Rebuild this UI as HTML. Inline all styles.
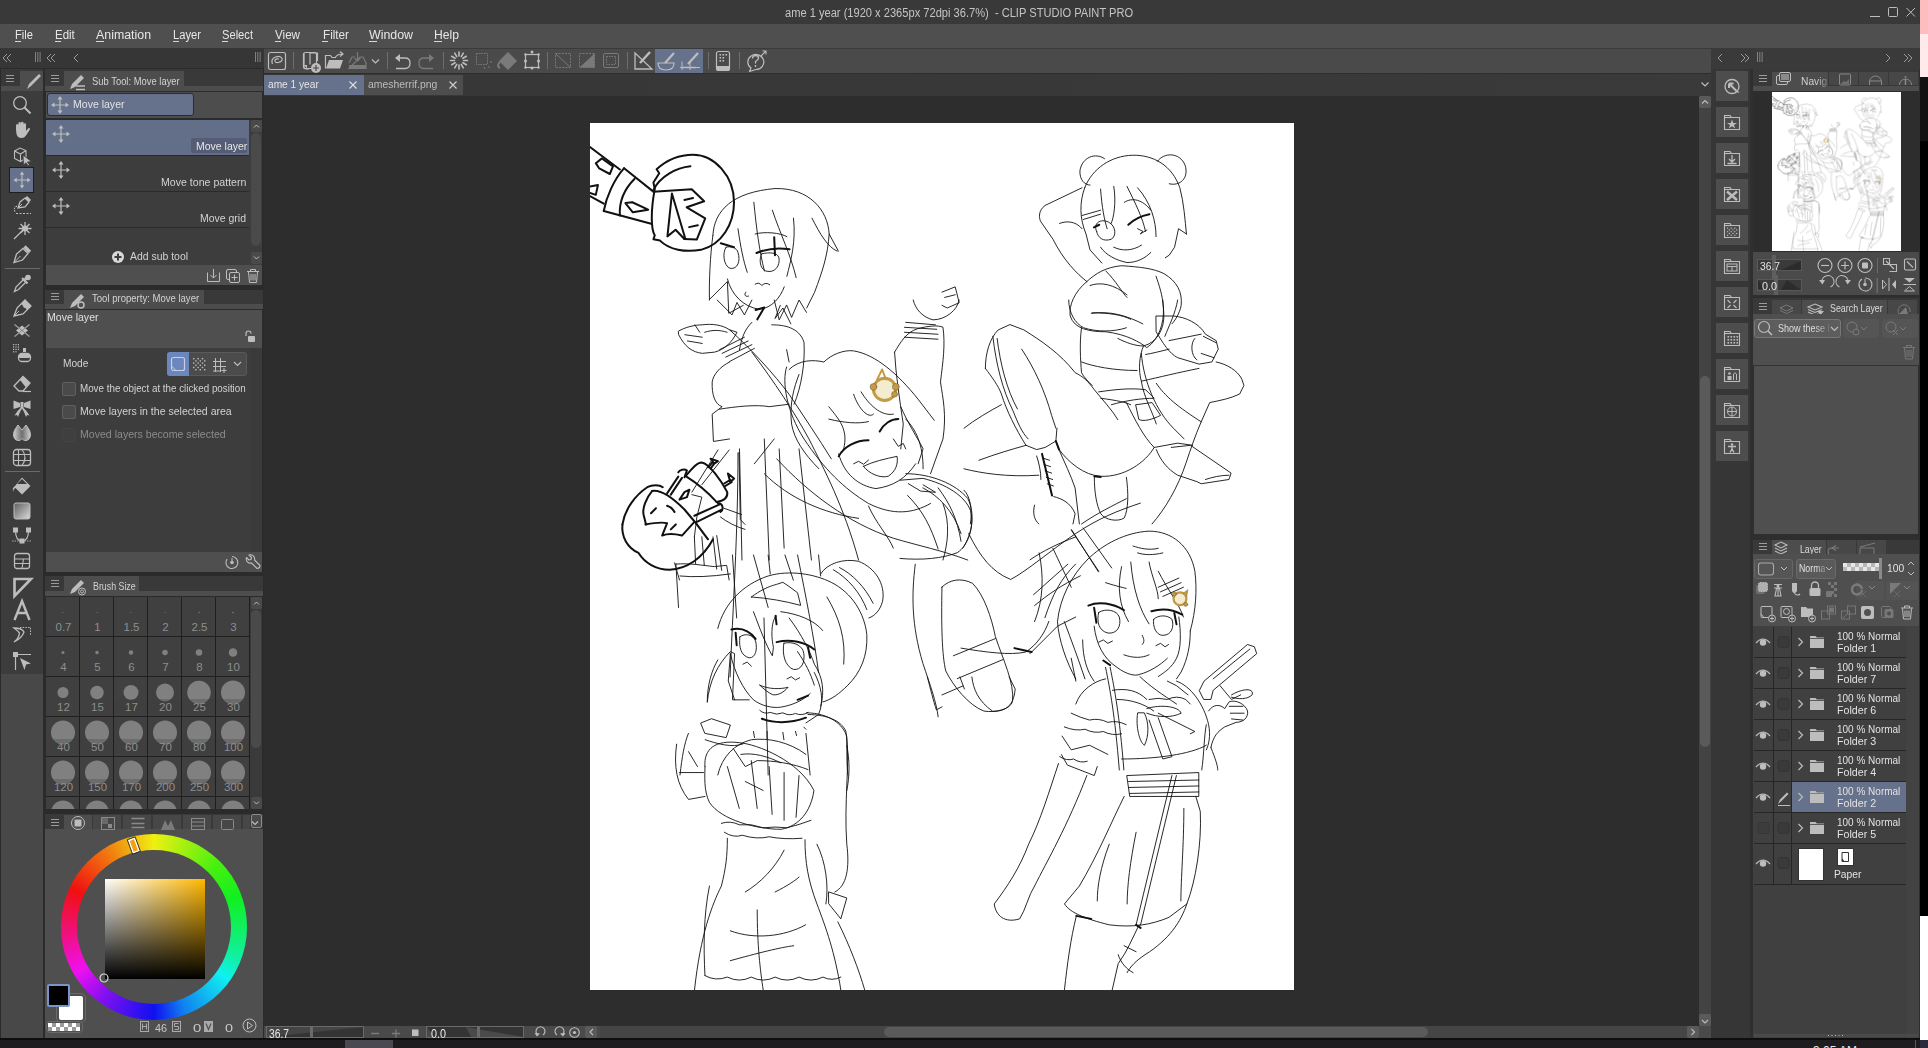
<!DOCTYPE html>
<html><head><meta charset="utf-8">
<style>
*{margin:0;padding:0;box-sizing:border-box}
html,body{width:1928px;height:1048px;overflow:hidden;background:#2d2d2d;font-family:"Liberation Sans",sans-serif;color:#d4d4d4;font-size:11px}
.a{position:absolute}
.t{position:absolute;white-space:pre;line-height:1;transform-origin:0 0}
svg{position:absolute;overflow:visible}
</style></head><body>
<div class="a" style="left:0px;top:0px;width:1920px;height:24px;background:#393939;"></div>
<div class="t" style="left:785.40px;top:7.24px;font-size:12px;color:#c4c4c4;transform:scaleX(0.9254);">ame 1 year (1920 x 2365px 72dpi 36.7%)  - CLIP STUDIO PAINT PRO</div>
<svg style="left:1868px;top:0px;" width="52" height="24" viewBox="0 0 52 24"><line x1="2" y1="16.5" x2="12" y2="16.5" stroke="#bdbdbd" stroke-width="1"/><rect x="20.5" y="7.5" width="9" height="9" rx="1" fill="none" stroke="#bdbdbd" stroke-width="1"/><path d="M38.5 8 L47 16.5 M47 8 L38.5 16.5" stroke="#bdbdbd" stroke-width="1"/></svg>
<div class="a" style="left:0px;top:24px;width:1920px;height:24px;background:#4f4f4f;"></div>
<div class="t" style="left:15.40px;top:29.44px;font-size:12px;color:#e6e6e6;transform:scaleX(0.9310);">File</div>
<div class="a" style="left:15px;top:41px;width:6px;height:1px;background:#d8d8d8;"></div>
<div class="t" style="left:55.40px;top:29.44px;font-size:12px;color:#e6e6e6;transform:scaleX(0.9576);">Edit</div>
<div class="a" style="left:55px;top:41px;width:6px;height:1px;background:#d8d8d8;"></div>
<div class="t" style="left:96.00px;top:29.44px;font-size:12px;color:#e6e6e6;transform:scaleX(1.0308);">Animation</div>
<div class="a" style="left:96px;top:41px;width:8px;height:1px;background:#d8d8d8;"></div>
<div class="t" style="left:173.00px;top:29.44px;font-size:12px;color:#e6e6e6;transform:scaleX(0.9329);">Layer</div>
<div class="a" style="left:173px;top:41px;width:6px;height:1px;background:#d8d8d8;"></div>
<div class="t" style="left:222.00px;top:29.44px;font-size:12px;color:#e6e6e6;transform:scaleX(0.9295);">Select</div>
<div class="a" style="left:222px;top:41px;width:6px;height:1px;background:#d8d8d8;"></div>
<div class="t" style="left:275.00px;top:29.44px;font-size:12px;color:#e6e6e6;transform:scaleX(0.9693);">View</div>
<div class="a" style="left:275px;top:41px;width:6px;height:1px;background:#d8d8d8;"></div>
<div class="t" style="left:322.50px;top:29.44px;font-size:12px;color:#e6e6e6;transform:scaleX(0.9751);">Filter</div>
<div class="a" style="left:322px;top:41px;width:6px;height:1px;background:#d8d8d8;"></div>
<div class="t" style="left:369.00px;top:29.44px;font-size:12px;color:#e6e6e6;transform:scaleX(1.0310);">Window</div>
<div class="a" style="left:369px;top:41px;width:8px;height:1px;background:#d8d8d8;"></div>
<div class="t" style="left:434.00px;top:29.44px;font-size:12px;color:#e6e6e6;transform:scaleX(1.0130);">Help</div>
<div class="a" style="left:434px;top:41px;width:8px;height:1px;background:#d8d8d8;"></div>
<div class="a" style="left:0px;top:48px;width:264px;height:20px;background:#363636;"></div>
<div class="a" style="left:264px;top:48px;width:1447px;height:25px;background:#4a4a4a;"></div>
<div class="a" style="left:264px;top:48px;width:1447px;height:1px;background:#3a3a3a;"></div>
<div class="a" style="left:1711px;top:48px;width:209px;height:21px;background:#3a3a3a;"></div>
<svg style="left:0px;top:48px;" width="264" height="20" viewBox="0 0 264 20"><path d="M7 6 L3 10 L7 14 M11 6 L7 10 L11 14" fill="none" stroke="#9a9a9a" stroke-width="1"/><path d="M35.5 4 V14 M37.8 4 V14 M40.1 4 V14" stroke="#8a8a8a" stroke-width="0.9"/><path d="M51 6 L47 10 L51 14 M55 6 L51 10 L55 14" fill="none" stroke="#9a9a9a" stroke-width="1"/><path d="M78 6 L74 10 L78 14" fill="none" stroke="#9a9a9a" stroke-width="1"/><path d="M255.5 4 V14 M257.8 4 V14 M260.1 4 V14" stroke="#8a8a8a" stroke-width="0.9"/></svg>
<svg style="left:1711px;top:48px;" width="209" height="21" viewBox="0 0 209 21"><path d="M11 6 L7 10 L11 14" fill="none" stroke="#9a9a9a" stroke-width="1"/><path d="M30 6 L34 10 L30 14 M34 6 L38 10 L34 14" fill="none" stroke="#9a9a9a" stroke-width="1"/><path d="M46.5 4 V14 M48.8 4 V14 M51.1 4 V14" stroke="#8a8a8a" stroke-width="0.9"/><path d="M175 6 L179 10 L175 14" fill="none" stroke="#9a9a9a" stroke-width="1"/><path d="M193 6 L197 10 L193 14 M197 6 L201 10 L197 14" fill="none" stroke="#9a9a9a" stroke-width="1"/></svg>
<div class="a" style="left:1920px;top:0px;width:8px;height:34px;background:#fdbcbd;"></div>
<div class="a" style="left:1920px;top:34px;width:8px;height:43px;background:#feeaea;"></div>
<div class="a" style="left:1920px;top:77px;width:8px;height:64px;background:#111111;"></div>
<div class="a" style="left:1920px;top:141px;width:8px;height:775px;background:#000000;"></div>
<div class="a" style="left:1920px;top:916px;width:8px;height:124px;background:#ffffff;"></div>
<div class="a" style="left:0px;top:68px;width:264px;height:972px;background:#2b2b2b;"></div>
<div class="a" style="left:1px;top:69px;width:42px;height:17px;background:#393939;"></div>
<div class="a" style="left:20px;top:71px;width:23px;height:15px;background:#4d4d4d;"></div>
<div class="a" style="left:1px;top:86px;width:42px;height:5px;background:#4d4d4d;"></div>
<svg style="left:6px;top:75px;" width="8" height="7" viewBox="0 0 8 7"><path d="M0 0.5 H8 M0 3.5 H8 M0 6.5 H8" stroke="#9c9c9c" stroke-width="1"/></svg>
<svg style="left:20px;top:71px;" width="23" height="20" viewBox="0 0 23 20"><path d="M7 18 L9 13 L19 3 L21 5 L11 15 Z" fill="#bdbdbd"/></svg>
<div class="a" style="left:1px;top:91px;width:42px;height:583px;background:#3c3c3c;"></div>
<div class="a" style="left:1px;top:674px;width:42px;height:364px;background:#484848;"></div>
<div class="a" style="left:10px;top:168px;width:23px;height:24px;background:#66718c;outline:1px solid #1e1e1e"></div>
<div class="a" style="left:5px;top:268px;width:35px;height:1px;background:#6a6a6a;"></div>
<div class="a" style="left:5px;top:471px;width:35px;height:1px;background:#6a6a6a;"></div>
<div class="a" style="left:45px;top:69px;width:218px;height:17px;background:#393939;"></div>
<div class="a" style="left:64px;top:71px;width:120px;height:15px;background:#4d4d4d;"></div>
<div class="a" style="left:45px;top:86px;width:218px;height:5px;background:#4d4d4d;"></div>
<svg style="left:51px;top:75px;" width="8" height="7" viewBox="0 0 8 7"><path d="M0 0.5 H8 M0 3.5 H8 M0 6.5 H8" stroke="#9c9c9c" stroke-width="1"/></svg>
<div class="t" style="left:91.90px;top:76.29px;font-size:11px;color:#d2d2d2;transform:scaleX(0.8555);">Sub Tool: Move layer</div>
<svg style="left:64px;top:71px;" width="26" height="20" viewBox="0 0 26 20"><path d="M6 18 L8 13 L17 4 L20 7 L11 16 Z" fill="#bdbdbd"/><path d="M12 15 H21 M12 18.5 H21" stroke="#bdbdbd" stroke-width="1.6"/></svg>
<div class="a" style="left:46px;top:92px;width:216px;height:26px;background:#4d4d4d;"></div>
<div class="a" style="left:47px;top:93px;width:147px;height:23px;background:#66718c;border-radius:3px;border:1px solid #2c2c2c"></div>
<div class="t" style="left:72.50px;top:99.17px;font-size:11.5px;color:#e2e2e2;transform:scaleX(0.9157);">Move layer</div>
<div class="a" style="left:46px;top:120px;width:216px;height:145px;background:#3d3d3d;"></div>
<div class="a" style="left:46px;top:120px;width:203px;height:35px;background:#636e88;"></div>
<div class="a" style="left:191px;top:138px;width:56px;height:15px;background:#545d75;border-radius:2px"></div>
<div class="t" style="left:195.70px;top:140.97px;font-size:11.5px;color:#e6e6e6;transform:scaleX(0.9122);">Move layer</div>
<div class="a" style="left:46px;top:155px;width:203px;height:1px;background:#2a2a2a;"></div>
<div class="a" style="left:46px;top:191px;width:203px;height:1px;background:#2a2a2a;"></div>
<div class="a" style="left:46px;top:227px;width:203px;height:1px;background:#2a2a2a;"></div>
<div class="t" style="left:160.60px;top:176.87px;font-size:11.5px;color:#d2d2d2;transform:scaleX(0.9214);">Move tone pattern</div>
<div class="t" style="left:200.00px;top:212.77px;font-size:11.5px;color:#d2d2d2;transform:scaleX(0.9111);">Move grid</div>
<div class="a" style="left:251px;top:120px;width:11px;height:12px;background:#4a4a4a;border-radius:2px"></div>
<div class="a" style="left:251px;top:133px;width:10px;height:113px;background:#4a4a4a;border-radius:5px"></div>
<div class="a" style="left:251px;top:252px;width:11px;height:12px;background:#4a4a4a;border-radius:2px"></div>
<svg style="left:251px;top:120px;" width="11" height="144" viewBox="0 0 11 144"><path d="M3 7.5 L5.5 5 L8 7.5" fill="none" stroke="#bdbdbd" stroke-width="1"/><path d="M3 136.5 L5.5 139 L8 136.5" fill="none" stroke="#bdbdbd" stroke-width="1"/></svg>
<svg style="left:49.5px;top:94.5px;" width="20" height="20" viewBox="0 0 20 20"><g transform="translate(10 10) scale(1.0)"><path d="M0 -7 V7 M-7 0 H7" stroke="#bdbdbd" stroke-width="1.2"/><path d="M0 -9 L-2.5 -5.5 H2.5 Z M0 9 L-2.5 5.5 H2.5 Z M-9 0 L-5.5 -2.5 V2.5 Z M9 0 L5.5 -2.5 V2.5 Z" fill="#bdbdbd"/></g></svg>
<svg style="left:50.5px;top:124px;" width="20" height="20" viewBox="0 0 20 20"><g transform="translate(10 10) scale(1.0)"><path d="M0 -7 V7 M-7 0 H7" stroke="#bdbdbd" stroke-width="1.2"/><path d="M0 -9 L-2.5 -5.5 H2.5 Z M0 9 L-2.5 5.5 H2.5 Z M-9 0 L-5.5 -2.5 V2.5 Z M9 0 L5.5 -2.5 V2.5 Z" fill="#bdbdbd"/></g></svg>
<svg style="left:50.5px;top:160px;" width="20" height="20" viewBox="0 0 20 20"><g transform="translate(10 10) scale(1.0)"><path d="M0 -7 V7 M-7 0 H7" stroke="#bdbdbd" stroke-width="1.2"/><path d="M0 -9 L-2.5 -5.5 H2.5 Z M0 9 L-2.5 5.5 H2.5 Z M-9 0 L-5.5 -2.5 V2.5 Z M9 0 L5.5 -2.5 V2.5 Z" fill="#bdbdbd"/></g></svg>
<svg style="left:50.5px;top:196px;" width="20" height="20" viewBox="0 0 20 20"><g transform="translate(10 10) scale(1.0)"><path d="M0 -7 V7 M-7 0 H7" stroke="#bdbdbd" stroke-width="1.2"/><path d="M0 -9 L-2.5 -5.5 H2.5 Z M0 9 L-2.5 5.5 H2.5 Z M-9 0 L-5.5 -2.5 V2.5 Z M9 0 L5.5 -2.5 V2.5 Z" fill="#bdbdbd"/></g></svg>
<svg style="left:111px;top:250px;" width="14" height="14" viewBox="0 0 14 14"><circle cx="7" cy="7" r="6" fill="#d8d8d8"/><path d="M7 3.5 V10.5 M3.5 7 H10.5" stroke="#3d3d3d" stroke-width="2"/></svg>
<div class="t" style="left:130.00px;top:250.97px;font-size:11.5px;color:#d2d2d2;transform:scaleX(0.9072);">Add sub tool</div>
<div class="a" style="left:46px;top:265px;width:216px;height:20px;background:#4f4f4f;"></div>
<svg style="left:205px;top:267px;" width="58" height="16" viewBox="0 0 58 16"><path d="M2.5 5.5 V14.5 H14.5 V5.5" fill="none" stroke="#bdbdbd" stroke-width="1"/><path d="M8.5 2 V11 M5.5 8 L8.5 11 L11.5 8" fill="none" stroke="#bdbdbd" stroke-width="1"/><rect x="21.5" y="2.5" width="10" height="10" rx="1.5" fill="none" stroke="#bdbdbd"/><rect x="24.5" y="5.5" width="10" height="10" rx="1.5" fill="#4f4f4f" stroke="#bdbdbd"/><path d="M29.5 7.5 V13.5 M26.5 10.5 H32.5" stroke="#bdbdbd"/><path d="M42 4.5 H54 M45.5 4.5 V2.5 H50.5 V4.5 M43.5 5 L44.5 15.5 H51.5 L52.5 5 M46 7 V13.5 M48 7 V13.5 M50 7 V13.5" fill="none" stroke="#bdbdbd"/></svg>
<div class="a" style="left:45px;top:290px;width:218px;height:14px;background:#393939;"></div>
<div class="a" style="left:64px;top:290px;width:140px;height:14px;background:#4d4d4d;"></div>
<div class="a" style="left:45px;top:304px;width:218px;height:5px;background:#4d4d4d;"></div>
<svg style="left:51px;top:293px;" width="8" height="7" viewBox="0 0 8 7"><path d="M0 0.5 H8 M0 3.5 H8 M0 6.5 H8" stroke="#9c9c9c" stroke-width="1"/></svg>
<div class="t" style="left:92.40px;top:293.39px;font-size:11px;color:#d2d2d2;transform:scaleX(0.8673);">Tool property: Move layer</div>
<svg style="left:64px;top:290px;" width="28" height="20" viewBox="0 0 28 20"><path d="M6 18 L8 13 L17 4 L20 7 L11 16 Z" fill="#bdbdbd"/><circle cx="17" cy="15" r="3" fill="none" stroke="#bdbdbd" stroke-width="1.5"/></svg>
<div class="a" style="left:46px;top:310px;width:216px;height:38px;background:#4f4f4f;"></div>
<div class="t" style="left:47.30px;top:311.97px;font-size:11.5px;color:#e0e0e0;transform:scaleX(0.9157);">Move layer</div>
<svg style="left:243px;top:330px;" width="14" height="14" viewBox="0 0 14 14"><path d="M3 6 V3.5 A2.5 2.5 0 0 1 8 3.5" fill="none" stroke="#bdbdbd" stroke-width="1.2"/><rect x="5" y="6" width="7" height="6" rx="1" fill="#bdbdbd"/></svg>
<div class="a" style="left:46px;top:348px;width:216px;height:204px;background:#3d3d3d;"></div>
<div class="a" style="left:250px;top:348px;width:12px;height:204px;background:#3a3a3a;"></div>
<div class="t" style="left:62.60px;top:358.27px;font-size:11.5px;color:#d2d2d2;transform:scaleX(0.8830);">Mode</div>
<div class="a" style="left:167px;top:352px;width:80px;height:24px;background:#4b4b4b;border-radius:3px;border:1px solid #5a5a5a"></div>
<div class="a" style="left:167px;top:352px;width:22px;height:24px;background:#6c86bf;border-radius:3px 0 0 3px"></div>
<svg style="left:167px;top:352px;" width="80" height="24" viewBox="0 0 80 24"><rect x="4.5" y="5.5" width="13" height="13" rx="2" fill="none" stroke="#c9cfdf" stroke-width="1.2"/><path d="M4.5 14 L9 18.5" stroke="#c9cfdf"/><g fill="#bdbdbd"><rect x="26.0" y="6.0" width="1.4" height="1.4"/><rect x="26.0" y="10.4" width="1.4" height="1.4"/><rect x="26.0" y="14.8" width="1.4" height="1.4"/><rect x="28.2" y="8.2" width="1.4" height="1.4"/><rect x="28.2" y="12.6" width="1.4" height="1.4"/><rect x="28.2" y="17.0" width="1.4" height="1.4"/><rect x="30.4" y="6.0" width="1.4" height="1.4"/><rect x="30.4" y="10.4" width="1.4" height="1.4"/><rect x="30.4" y="14.8" width="1.4" height="1.4"/><rect x="32.6" y="8.2" width="1.4" height="1.4"/><rect x="32.6" y="12.6" width="1.4" height="1.4"/><rect x="32.6" y="17.0" width="1.4" height="1.4"/><rect x="34.8" y="6.0" width="1.4" height="1.4"/><rect x="34.8" y="10.4" width="1.4" height="1.4"/><rect x="34.8" y="14.8" width="1.4" height="1.4"/><rect x="37.0" y="8.2" width="1.4" height="1.4"/><rect x="37.0" y="12.6" width="1.4" height="1.4"/><rect x="37.0" y="17.0" width="1.4" height="1.4"/></g><path d="M48.5 6 V20 M53.5 6 V20 M46 9.5 H59 M46 14.5 H59 M46 19 H54 M57 16 V21 M54.5 18.5 H59.5" stroke="#bdbdbd" stroke-width="1"/><path d="M67 10 L70.5 13.5 L74 10" fill="none" stroke="#bdbdbd" stroke-width="1.2"/></svg>
<div class="a" style="left:62px;top:382px;width:14px;height:14px;background:#4a4a4a;border-radius:2px;border:1px solid #5f5f5f"></div>
<div class="t" style="left:80.30px;top:382.97px;font-size:11.5px;color:#d2d2d2;transform:scaleX(0.8527);">Move the object at the clicked position</div>
<div class="a" style="left:62px;top:405px;width:14px;height:14px;background:#4a4a4a;border-radius:2px;border:1px solid #5f5f5f"></div>
<div class="t" style="left:80.30px;top:405.87px;font-size:11.5px;color:#d2d2d2;transform:scaleX(0.9164);">Move layers in the selected area</div>
<div class="a" style="left:62px;top:428px;width:14px;height:14px;background:#3f3f3f;border-radius:2px;border:1px solid #434343"></div>
<div class="t" style="left:80.30px;top:428.77px;font-size:11.5px;color:#8c8c8c;transform:scaleX(0.9192);">Moved layers become selected</div>
<div class="a" style="left:46px;top:552px;width:216px;height:20px;background:#4f4f4f;"></div>
<svg style="left:224px;top:554px;" width="38" height="16" viewBox="0 0 38 16"><path d="M8 2.5 A6 6 0 1 1 3 5" fill="none" stroke="#bdbdbd" stroke-width="1.1"/><circle cx="8" cy="8.5" r="1.8" fill="#bdbdbd"/><path d="M8 8.5 V4" stroke="#bdbdbd"/><path transform="translate(-2 0)" d="M35 14.5 L29.5 9 A4.2 4.2 0 0 1 24.5 3.5 L27 6 L29 5.5 L29.5 3.5 L27 1 A4.2 4.2 0 0 1 32.5 6 L38 11.5 Q38 14.5 35 14.5 Z" fill="none" stroke="#bdbdbd" stroke-width="1.1" stroke-linejoin="round"/></svg>
<div class="a" style="left:45px;top:576px;width:218px;height:15px;background:#393939;"></div>
<div class="a" style="left:64px;top:576px;width:75px;height:15px;background:#4d4d4d;"></div>
<div class="a" style="left:45px;top:591px;width:218px;height:5px;background:#4d4d4d;"></div>
<svg style="left:51px;top:580px;" width="8" height="7" viewBox="0 0 8 7"><path d="M0 0.5 H8 M0 3.5 H8 M0 6.5 H8" stroke="#9c9c9c" stroke-width="1"/></svg>
<div class="t" style="left:92.50px;top:581.39px;font-size:11px;color:#d2d2d2;transform:scaleX(0.8028);">Brush Size</div>
<svg style="left:64px;top:576px;" width="28" height="20" viewBox="0 0 28 20"><path d="M6 18 L8 13 L17 4 L20 7 L11 16 Z" fill="#bdbdbd"/><circle cx="18" cy="15.5" r="3.5" fill="#4d4d4d" stroke="#bdbdbd" stroke-width="1"/><circle cx="18" cy="15.5" r="1.5" fill="none" stroke="#bdbdbd" stroke-width="1"/></svg>
<div class="a" style="left:0;top:0;width:1928px;height:1048px;clip-path:inset(597px 1678px 239px 46px)">
<div class="a" style="left:46px;top:597px;width:204px;height:212px;background:#1f1f1f;"></div>
<div class="a" style="left:46px;top:597px;width:33px;height:39px;background:#404040;"></div>
<svg style="left:46px;top:597px;" width="33" height="39" viewBox="0 0 33 39"><circle cx="17" cy="15.5" r="0.5" fill="#808080"/></svg>
<div class="t" style="left:55.51px;top:622.27px;font-size:11.5px;color:#8e8e8e;transform:scaleX(1.0000);">0.7</div>
<div class="a" style="left:80px;top:597px;width:33px;height:39px;background:#404040;"></div>
<svg style="left:80px;top:597px;" width="33" height="39" viewBox="0 0 33 39"><circle cx="17" cy="15.5" r="0.5" fill="#808080"/></svg>
<div class="t" style="left:94.30px;top:622.27px;font-size:11.5px;color:#8e8e8e;transform:scaleX(1.0000);">1</div>
<div class="a" style="left:114px;top:597px;width:33px;height:39px;background:#404040;"></div>
<svg style="left:114px;top:597px;" width="33" height="39" viewBox="0 0 33 39"><circle cx="17" cy="15.5" r="0.5" fill="#808080"/></svg>
<div class="t" style="left:123.51px;top:622.27px;font-size:11.5px;color:#8e8e8e;transform:scaleX(1.0000);">1.5</div>
<div class="a" style="left:148px;top:597px;width:33px;height:39px;background:#404040;"></div>
<svg style="left:148px;top:597px;" width="33" height="39" viewBox="0 0 33 39"><circle cx="17" cy="15.5" r="0.5" fill="#808080"/></svg>
<div class="t" style="left:162.30px;top:622.27px;font-size:11.5px;color:#8e8e8e;transform:scaleX(1.0000);">2</div>
<div class="a" style="left:182px;top:597px;width:33px;height:39px;background:#404040;"></div>
<svg style="left:182px;top:597px;" width="33" height="39" viewBox="0 0 33 39"><circle cx="17" cy="15.5" r="0.65" fill="#808080"/></svg>
<div class="t" style="left:191.51px;top:622.27px;font-size:11.5px;color:#8e8e8e;transform:scaleX(1.0000);">2.5</div>
<div class="a" style="left:216px;top:597px;width:33px;height:39px;background:#404040;"></div>
<svg style="left:216px;top:597px;" width="33" height="39" viewBox="0 0 33 39"><circle cx="17" cy="15.5" r="0.8" fill="#808080"/></svg>
<div class="t" style="left:230.30px;top:622.27px;font-size:11.5px;color:#8e8e8e;transform:scaleX(1.0000);">3</div>
<div class="a" style="left:46px;top:637px;width:33px;height:39px;background:#404040;"></div>
<svg style="left:46px;top:637px;" width="33" height="39" viewBox="0 0 33 39"><circle cx="17" cy="15.5" r="1.5" fill="#808080"/></svg>
<div class="t" style="left:60.30px;top:662.27px;font-size:11.5px;color:#8e8e8e;transform:scaleX(1.0000);">4</div>
<div class="a" style="left:80px;top:637px;width:33px;height:39px;background:#404040;"></div>
<svg style="left:80px;top:637px;" width="33" height="39" viewBox="0 0 33 39"><circle cx="17" cy="15.5" r="1.75" fill="#808080"/></svg>
<div class="t" style="left:94.30px;top:662.27px;font-size:11.5px;color:#8e8e8e;transform:scaleX(1.0000);">5</div>
<div class="a" style="left:114px;top:637px;width:33px;height:39px;background:#404040;"></div>
<svg style="left:114px;top:637px;" width="33" height="39" viewBox="0 0 33 39"><circle cx="17" cy="15.5" r="2.25" fill="#808080"/></svg>
<div class="t" style="left:128.30px;top:662.27px;font-size:11.5px;color:#8e8e8e;transform:scaleX(1.0000);">6</div>
<div class="a" style="left:148px;top:637px;width:33px;height:39px;background:#404040;"></div>
<svg style="left:148px;top:637px;" width="33" height="39" viewBox="0 0 33 39"><circle cx="17" cy="15.5" r="2.75" fill="#808080"/></svg>
<div class="t" style="left:162.30px;top:662.27px;font-size:11.5px;color:#8e8e8e;transform:scaleX(1.0000);">7</div>
<div class="a" style="left:182px;top:637px;width:33px;height:39px;background:#404040;"></div>
<svg style="left:182px;top:637px;" width="33" height="39" viewBox="0 0 33 39"><circle cx="17" cy="15.5" r="3.25" fill="#808080"/></svg>
<div class="t" style="left:196.30px;top:662.27px;font-size:11.5px;color:#8e8e8e;transform:scaleX(1.0000);">8</div>
<div class="a" style="left:216px;top:637px;width:33px;height:39px;background:#404040;"></div>
<svg style="left:216px;top:637px;" width="33" height="39" viewBox="0 0 33 39"><circle cx="17" cy="15.5" r="4.25" fill="#808080"/></svg>
<div class="t" style="left:227.10px;top:662.27px;font-size:11.5px;color:#8e8e8e;transform:scaleX(1.0000);">10</div>
<div class="a" style="left:46px;top:677px;width:33px;height:39px;background:#404040;"></div>
<svg style="left:46px;top:677px;" width="33" height="39" viewBox="0 0 33 39"><circle cx="17" cy="15.5" r="5.5" fill="#808080"/></svg>
<div class="t" style="left:57.10px;top:702.27px;font-size:11.5px;color:#8e8e8e;transform:scaleX(1.0000);">12</div>
<div class="a" style="left:80px;top:677px;width:33px;height:39px;background:#404040;"></div>
<svg style="left:80px;top:677px;" width="33" height="39" viewBox="0 0 33 39"><circle cx="17" cy="15.5" r="6.75" fill="#808080"/></svg>
<div class="t" style="left:91.10px;top:702.27px;font-size:11.5px;color:#8e8e8e;transform:scaleX(1.0000);">15</div>
<div class="a" style="left:114px;top:677px;width:33px;height:39px;background:#404040;"></div>
<svg style="left:114px;top:677px;" width="33" height="39" viewBox="0 0 33 39"><circle cx="17" cy="15.5" r="7.5" fill="#808080"/></svg>
<div class="a" style="left:114px;top:699px;width:33px;height:17px;background:rgba(64,64,64,0.3);"></div>
<div class="t" style="left:125.10px;top:702.27px;font-size:11.5px;color:#8e8e8e;transform:scaleX(1.0000);">17</div>
<div class="a" style="left:148px;top:677px;width:33px;height:39px;background:#404040;"></div>
<svg style="left:148px;top:677px;" width="33" height="39" viewBox="0 0 33 39"><circle cx="17" cy="15.5" r="9.0" fill="#808080"/></svg>
<div class="a" style="left:148px;top:699px;width:33px;height:17px;background:rgba(64,64,64,0.3);"></div>
<div class="t" style="left:159.10px;top:702.27px;font-size:11.5px;color:#8e8e8e;transform:scaleX(1.0000);">20</div>
<div class="a" style="left:182px;top:677px;width:33px;height:39px;background:#404040;"></div>
<svg style="left:182px;top:677px;" width="33" height="39" viewBox="0 0 33 39"><circle cx="17" cy="15.5" r="11.75" fill="#808080"/></svg>
<div class="a" style="left:182px;top:699px;width:33px;height:17px;background:rgba(64,64,64,0.3);"></div>
<div class="t" style="left:193.10px;top:702.27px;font-size:11.5px;color:#8e8e8e;transform:scaleX(1.0000);">25</div>
<div class="a" style="left:216px;top:677px;width:33px;height:39px;background:#404040;"></div>
<svg style="left:216px;top:677px;" width="33" height="39" viewBox="0 0 33 39"><circle cx="17" cy="15.5" r="12.0" fill="#808080"/></svg>
<div class="a" style="left:216px;top:699px;width:33px;height:17px;background:rgba(64,64,64,0.3);"></div>
<div class="t" style="left:227.10px;top:702.27px;font-size:11.5px;color:#8e8e8e;transform:scaleX(1.0000);">30</div>
<div class="a" style="left:46px;top:717px;width:33px;height:39px;background:#404040;"></div>
<svg style="left:46px;top:717px;" width="33" height="39" viewBox="0 0 33 39"><circle cx="17" cy="15.5" r="12.0" fill="#808080"/></svg>
<div class="a" style="left:46px;top:739px;width:33px;height:17px;background:rgba(64,64,64,0.3);"></div>
<div class="t" style="left:57.10px;top:742.27px;font-size:11.5px;color:#8e8e8e;transform:scaleX(1.0000);">40</div>
<div class="a" style="left:80px;top:717px;width:33px;height:39px;background:#404040;"></div>
<svg style="left:80px;top:717px;" width="33" height="39" viewBox="0 0 33 39"><circle cx="17" cy="15.5" r="12.0" fill="#808080"/></svg>
<div class="a" style="left:80px;top:739px;width:33px;height:17px;background:rgba(64,64,64,0.3);"></div>
<div class="t" style="left:91.10px;top:742.27px;font-size:11.5px;color:#8e8e8e;transform:scaleX(1.0000);">50</div>
<div class="a" style="left:114px;top:717px;width:33px;height:39px;background:#404040;"></div>
<svg style="left:114px;top:717px;" width="33" height="39" viewBox="0 0 33 39"><circle cx="17" cy="15.5" r="12.0" fill="#808080"/></svg>
<div class="a" style="left:114px;top:739px;width:33px;height:17px;background:rgba(64,64,64,0.3);"></div>
<div class="t" style="left:125.10px;top:742.27px;font-size:11.5px;color:#8e8e8e;transform:scaleX(1.0000);">60</div>
<div class="a" style="left:148px;top:717px;width:33px;height:39px;background:#404040;"></div>
<svg style="left:148px;top:717px;" width="33" height="39" viewBox="0 0 33 39"><circle cx="17" cy="15.5" r="12.0" fill="#808080"/></svg>
<div class="a" style="left:148px;top:739px;width:33px;height:17px;background:rgba(64,64,64,0.3);"></div>
<div class="t" style="left:159.10px;top:742.27px;font-size:11.5px;color:#8e8e8e;transform:scaleX(1.0000);">70</div>
<div class="a" style="left:182px;top:717px;width:33px;height:39px;background:#404040;"></div>
<svg style="left:182px;top:717px;" width="33" height="39" viewBox="0 0 33 39"><circle cx="17" cy="15.5" r="12.0" fill="#808080"/></svg>
<div class="a" style="left:182px;top:739px;width:33px;height:17px;background:rgba(64,64,64,0.3);"></div>
<div class="t" style="left:193.10px;top:742.27px;font-size:11.5px;color:#8e8e8e;transform:scaleX(1.0000);">80</div>
<div class="a" style="left:216px;top:717px;width:33px;height:39px;background:#404040;"></div>
<svg style="left:216px;top:717px;" width="33" height="39" viewBox="0 0 33 39"><circle cx="17" cy="15.5" r="12.0" fill="#808080"/></svg>
<div class="a" style="left:216px;top:739px;width:33px;height:17px;background:rgba(64,64,64,0.3);"></div>
<div class="t" style="left:223.91px;top:742.27px;font-size:11.5px;color:#8e8e8e;transform:scaleX(1.0000);">100</div>
<div class="a" style="left:46px;top:757px;width:33px;height:39px;background:#404040;"></div>
<svg style="left:46px;top:757px;" width="33" height="39" viewBox="0 0 33 39"><circle cx="17" cy="15.5" r="12.0" fill="#808080"/></svg>
<div class="a" style="left:46px;top:779px;width:33px;height:17px;background:rgba(64,64,64,0.3);"></div>
<div class="t" style="left:53.91px;top:782.27px;font-size:11.5px;color:#8e8e8e;transform:scaleX(1.0000);">120</div>
<div class="a" style="left:80px;top:757px;width:33px;height:39px;background:#404040;"></div>
<svg style="left:80px;top:757px;" width="33" height="39" viewBox="0 0 33 39"><circle cx="17" cy="15.5" r="12.0" fill="#808080"/></svg>
<div class="a" style="left:80px;top:779px;width:33px;height:17px;background:rgba(64,64,64,0.3);"></div>
<div class="t" style="left:87.91px;top:782.27px;font-size:11.5px;color:#8e8e8e;transform:scaleX(1.0000);">150</div>
<div class="a" style="left:114px;top:757px;width:33px;height:39px;background:#404040;"></div>
<svg style="left:114px;top:757px;" width="33" height="39" viewBox="0 0 33 39"><circle cx="17" cy="15.5" r="12.0" fill="#808080"/></svg>
<div class="a" style="left:114px;top:779px;width:33px;height:17px;background:rgba(64,64,64,0.3);"></div>
<div class="t" style="left:121.91px;top:782.27px;font-size:11.5px;color:#8e8e8e;transform:scaleX(1.0000);">170</div>
<div class="a" style="left:148px;top:757px;width:33px;height:39px;background:#404040;"></div>
<svg style="left:148px;top:757px;" width="33" height="39" viewBox="0 0 33 39"><circle cx="17" cy="15.5" r="12.0" fill="#808080"/></svg>
<div class="a" style="left:148px;top:779px;width:33px;height:17px;background:rgba(64,64,64,0.3);"></div>
<div class="t" style="left:155.91px;top:782.27px;font-size:11.5px;color:#8e8e8e;transform:scaleX(1.0000);">200</div>
<div class="a" style="left:182px;top:757px;width:33px;height:39px;background:#404040;"></div>
<svg style="left:182px;top:757px;" width="33" height="39" viewBox="0 0 33 39"><circle cx="17" cy="15.5" r="12.0" fill="#808080"/></svg>
<div class="a" style="left:182px;top:779px;width:33px;height:17px;background:rgba(64,64,64,0.3);"></div>
<div class="t" style="left:189.91px;top:782.27px;font-size:11.5px;color:#8e8e8e;transform:scaleX(1.0000);">250</div>
<div class="a" style="left:216px;top:757px;width:33px;height:39px;background:#404040;"></div>
<svg style="left:216px;top:757px;" width="33" height="39" viewBox="0 0 33 39"><circle cx="17" cy="15.5" r="12.0" fill="#808080"/></svg>
<div class="a" style="left:216px;top:779px;width:33px;height:17px;background:rgba(64,64,64,0.3);"></div>
<div class="t" style="left:223.91px;top:782.27px;font-size:11.5px;color:#8e8e8e;transform:scaleX(1.0000);">300</div>
<div class="a" style="left:46px;top:797px;width:33px;height:39px;background:#404040;"></div>
<svg style="left:46px;top:797px;" width="33" height="39" viewBox="0 0 33 39"><circle cx="17" cy="15.5" r="12.0" fill="#808080"/></svg>
<div class="a" style="left:80px;top:797px;width:33px;height:39px;background:#404040;"></div>
<svg style="left:80px;top:797px;" width="33" height="39" viewBox="0 0 33 39"><circle cx="17" cy="15.5" r="12.0" fill="#808080"/></svg>
<div class="a" style="left:114px;top:797px;width:33px;height:39px;background:#404040;"></div>
<svg style="left:114px;top:797px;" width="33" height="39" viewBox="0 0 33 39"><circle cx="17" cy="15.5" r="12.0" fill="#808080"/></svg>
<div class="a" style="left:148px;top:797px;width:33px;height:39px;background:#404040;"></div>
<svg style="left:148px;top:797px;" width="33" height="39" viewBox="0 0 33 39"><circle cx="17" cy="15.5" r="12.0" fill="#808080"/></svg>
<div class="a" style="left:182px;top:797px;width:33px;height:39px;background:#404040;"></div>
<svg style="left:182px;top:797px;" width="33" height="39" viewBox="0 0 33 39"><circle cx="17" cy="15.5" r="12.0" fill="#808080"/></svg>
<div class="a" style="left:216px;top:797px;width:33px;height:39px;background:#404040;"></div>
<svg style="left:216px;top:797px;" width="33" height="39" viewBox="0 0 33 39"><circle cx="17" cy="15.5" r="12.0" fill="#808080"/></svg>
</div>
<div class="a" style="left:250px;top:597px;width:12px;height:212px;background:#3a3a3a;"></div>
<div class="a" style="left:251px;top:597px;width:11px;height:12px;background:#4a4a4a;border-radius:2px"></div>
<div class="a" style="left:251px;top:610px;width:10px;height:138px;background:#4a4a4a;border-radius:5px"></div>
<div class="a" style="left:251px;top:797px;width:11px;height:12px;background:#4a4a4a;border-radius:2px"></div>
<svg style="left:251px;top:597px;" width="11" height="212" viewBox="0 0 11 212"><path d="M3 7.5 L5.5 5 L8 7.5" fill="none" stroke="#bdbdbd" stroke-width="1"/><path d="M3 204.5 L5.5 207 L8 204.5" fill="none" stroke="#bdbdbd" stroke-width="1"/></svg>
<div class="a" style="left:45px;top:814px;width:218px;height:16px;background:#393939;"></div>
<div class="a" style="left:45px;top:829px;width:218px;height:209px;background:#4f4f4f;"></div>
<div class="a" style="left:64px;top:815px;width:28px;height:15px;background:#4d4d4d;"></div>
<div class="a" style="left:93px;top:815px;width:28px;height:14px;background:#474747;"></div>
<div class="a" style="left:123px;top:815px;width:28px;height:14px;background:#474747;"></div>
<div class="a" style="left:153px;top:815px;width:28px;height:14px;background:#474747;"></div>
<div class="a" style="left:183px;top:815px;width:28px;height:14px;background:#474747;"></div>
<div class="a" style="left:213px;top:815px;width:28px;height:14px;background:#474747;"></div>
<div class="a" style="left:243px;top:815px;width:7px;height:14px;background:#474747;"></div>
<svg style="left:51px;top:819px;" width="8" height="7" viewBox="0 0 8 7"><path d="M0 0.5 H8 M0 3.5 H8 M0 6.5 H8" stroke="#9c9c9c" stroke-width="1"/></svg>
<div class="a" style="left:251px;top:814px;width:11px;height:14px;background:#4a4a4a;border-radius:2px;border:1px solid #8a8a8a"></div>
<svg style="left:64px;top:814px;" width="200" height="16" viewBox="0 0 200 16"><circle cx="14" cy="9" r="6.5" fill="none" stroke="#bdbdbd" stroke-width="1"/><rect x="10.5" y="5.5" width="7" height="7" rx="1" fill="#bdbdbd"/><rect x="37.5" y="3.5" width="13" height="12" fill="none" stroke="#8a8a8a"/><rect x="38" y="4" width="6" height="6" fill="#6a6a6a"/><rect x="44" y="10" width="4" height="4" fill="#8a8a8a"/><path d="M67.5 4.5 H80.5 M67.5 9.5 H80.5 M67.5 13.5 H80.5" stroke="#8a8a8a" stroke-width="1.5"/><path d="M97 16 L101 6 L104 12 L107 6 L111 16 Z" fill="#7a7a7a"/><rect x="127.5" y="4.5" width="13" height="11" fill="none" stroke="#8a8a8a"/><path d="M127.5 8 H140.5 M127.5 12 H140.5" stroke="#8a8a8a"/><rect x="157.5" y="5.5" width="12" height="10" rx="1" fill="none" stroke="#8a8a8a"/><path d="M188 7.5 L191 10.5 L194 7.5" fill="none" stroke="#bdbdbd" stroke-width="1.2"/></svg>
<div class="a" style="left:61px;top:834px;width:186px;height:186px;border-radius:50%;background:conic-gradient(from 0deg,#f0f010,#48f010 45deg,#10f020 70deg,#10f0a0 110deg,#10f0f0 125deg,#1080f0 160deg,#1010f0 180deg,#8010f0 215deg,#f010f0 240deg,#f01080 265deg,#f01010 295deg,#f08010 330deg,#f0f010 360deg)"></div>
<div class="a" style="left:77px;top:850px;width:154px;height:154px;background:#4f4f4f;border-radius:50%"></div>
<div class="a" style="left:105px;top:879px;width:100px;height:100px;background:linear-gradient(to bottom,rgba(0,0,0,0),#000),linear-gradient(to right,#fff,#ffb800)"></div>
<svg style="left:126px;top:837px;" width="16" height="18" viewBox="0 0 16 18"><rect x="-3" y="-7" width="6" height="13" fill="#f0a010" stroke="#fff" stroke-width="1.5" transform="translate(8 9) rotate(-20)"/><rect x="-4.2" y="-8.2" width="8.4" height="15.4" fill="none" stroke="#222" stroke-width="0.8" transform="translate(8 9) rotate(-20)"/></svg>
<svg style="left:98px;top:972px;" width="12" height="12" viewBox="0 0 12 12"><circle cx="6" cy="6" r="4" fill="none" stroke="#ddd" stroke-width="1.2"/></svg>
<div class="a" style="left:59px;top:996px;width:24px;height:24px;background:#ffffff;border-radius:2px;outline:1px solid #6a6a6a;outline-offset:2px"></div>
<div class="a" style="left:47px;top:984px;width:23px;height:23px;background:#000000;border-radius:2px;border:2px solid #7a93c8"></div>
<div class="a" style="left:46px;top:1021px;width:37px;height:12px;border-radius:4px;border:1px solid #6a6a6a;background:#4f4f4f"></div>
<svg style="left:48px;top:1023px;border-radius:3px" width="33" height="8" viewBox="0 0 33 8"><rect x="0" y="0" width="4" height="4" fill="#fff"/><rect x="0" y="4" width="4" height="4" fill="#9a9a9a"/><rect x="4" y="4" width="4" height="4" fill="#fff"/><rect x="4" y="0" width="4" height="4" fill="#9a9a9a"/><rect x="8" y="0" width="4" height="4" fill="#fff"/><rect x="8" y="4" width="4" height="4" fill="#9a9a9a"/><rect x="12" y="4" width="4" height="4" fill="#fff"/><rect x="12" y="0" width="4" height="4" fill="#9a9a9a"/><rect x="16" y="0" width="4" height="4" fill="#fff"/><rect x="16" y="4" width="4" height="4" fill="#9a9a9a"/><rect x="20" y="4" width="4" height="4" fill="#fff"/><rect x="20" y="0" width="4" height="4" fill="#9a9a9a"/><rect x="24" y="0" width="4" height="4" fill="#fff"/><rect x="24" y="4" width="4" height="4" fill="#9a9a9a"/><rect x="28" y="4" width="4" height="4" fill="#fff"/><rect x="28" y="0" width="4" height="4" fill="#9a9a9a"/></svg>
<svg style="left:140px;top:1021px;" width="12" height="12" viewBox="0 0 12 12"><rect x="0.5" y="0.5" width="8" height="10" fill="none" stroke="#aaa"/><path d="M2.5 2.5 V8.5 M6.5 2.5 V8.5 M2.5 5.5 H6.5" stroke="#aaa"/></svg>
<div class="t" style="left:155.00px;top:1022.97px;font-size:11.5px;color:#c8c8c8;transform:scaleX(0.9382);">46</div>
<svg style="left:172px;top:1021px;" width="12" height="12" viewBox="0 0 12 12"><rect x="0.5" y="0.5" width="8" height="10" fill="none" stroke="#aaa"/><path d="M6.5 2.5 H2.5 V5.5 H6.5 V8.5 H2.5" fill="none" stroke="#aaa"/></svg>
<div class="t" style="left:192.70px;top:1022.97px;font-size:11.5px;color:#c8c8c8;transform:scaleX(1.2979);">0</div>
<svg style="left:204px;top:1021px;" width="12" height="12" viewBox="0 0 12 12"><rect x="0" y="0" width="9" height="11" fill="#aaa"/><path d="M2 2.5 L4.5 8.5 L7 2.5" fill="none" stroke="#4f4f4f" stroke-width="1.2"/></svg>
<div class="t" style="left:225.00px;top:1022.97px;font-size:11.5px;color:#c8c8c8;transform:scaleX(1.2510);">0</div>
<svg style="left:242px;top:1018px;" width="16" height="16" viewBox="0 0 16 16"><circle cx="7.5" cy="7.5" r="6.5" fill="none" stroke="#bdbdbd" stroke-width="1"/><path d="M5.5 4 L10.5 7.5 L5.5 11 Z" fill="none" stroke="#bdbdbd"/></svg>
<svg style="left:12px;top:95px;" width="20" height="20" viewBox="0 0 20 20"><circle cx="8" cy="8" r="6.3" fill="none" stroke="#bdbdbd" stroke-width="1.3"/><path d="M12.5 12.5 L18.5 18.5" stroke="#bdbdbd" stroke-width="2"/></svg>
<svg style="left:12px;top:121px;" width="20" height="20" viewBox="0 0 20 20"><path d="M4 9 V4.5 Q4 3 5.2 3 Q6.4 3 6.4 4.5 V8 V2.5 Q6.4 1 7.7 1 Q9 1 9 2.5 V8 V2 Q9 0.8 10.3 0.8 Q11.6 0.8 11.6 2 V8 V3.5 Q11.6 2.2 12.8 2.2 Q14 2.2 14 3.5 V10 L16 7.5 Q17 6.5 17.8 7.3 Q18.3 7.9 17.6 9 L14 14.5 Q12.5 17 9.5 17 Q5.5 17 4.5 13 Z" fill="#bdbdbd"/></svg>
<svg style="left:12px;top:145px;" width="20" height="20" viewBox="0 0 20 20"><path d="M2.5 6 L8 3 L14 5.5 V13 L8.5 16.5 L2.5 13.5 Z M2.5 6 L8.5 9 L14 5.5 M8.5 9 V16.5" fill="none" stroke="#bdbdbd" stroke-width="1.1"/><path d="M11 10 L19.5 16.5 L15.5 17 L17.5 20 L16 20.8 L14 17.8 L11.5 20 Z" fill="#bdbdbd" stroke="#3c3c3c" stroke-width="0.8"/></svg>
<svg style="left:11.5px;top:170px;" width="20" height="20" viewBox="0 0 20 20"><g transform="translate(10 10) scale(0.95)"><path d="M0 -7 V7 M-7 0 H7" stroke="#bdbdbd" stroke-width="1.2"/><path d="M0 -9 L-2.5 -5.5 H2.5 Z M0 9 L-2.5 5.5 H2.5 Z M-9 0 L-5.5 -2.5 V2.5 Z M9 0 L5.5 -2.5 V2.5 Z" fill="#bdbdbd"/></g></svg>
<svg style="left:12px;top:195px;" width="20" height="20" viewBox="0 0 20 20"><path d="M6 13 L8 7 L13 3 L17 7 L13 12 Z" fill="none" stroke="#bdbdbd" stroke-width="1.3"/><path d="M14 2 L18 6" stroke="#bdbdbd" stroke-width="3"/><path d="M6 13 L10 9" stroke="#bdbdbd" stroke-width="1"/><path d="M5 11 Q1 13 3 16.5" fill="none" stroke="#bdbdbd" stroke-width="1.1" stroke-dasharray="1.5 1.2"/><path d="M4 18.5 H19" stroke="#bdbdbd" stroke-width="1.1" stroke-dasharray="2 1.5"/></svg>
<svg style="left:12px;top:220px;" width="20" height="20" viewBox="0 0 20 20"><path d="M2 19 L11 10" stroke="#bdbdbd" stroke-width="1.2"/><path d="M13 2 V15 M6.5 8.5 H19.5 M8.5 4 L17.5 13 M17.5 4 L8.5 13" stroke="#bdbdbd" stroke-width="1.3"/><circle cx="13" cy="8.5" r="3" fill="#bdbdbd"/></svg>
<svg style="left:12px;top:244px;" width="20" height="20" viewBox="0 0 20 20"><path d="M2 18.5 L4.5 10 L11 4.5 L16 9.5 L10.5 16 Z" fill="none" stroke="#bdbdbd" stroke-width="1.3"/><path d="M12.5 2.5 L18 8" stroke="#bdbdbd" stroke-width="3.2"/><path d="M2 18.5 L8.5 12" stroke="#bdbdbd" stroke-width="1"/></svg>
<svg style="left:12px;top:273px;" width="20" height="20" viewBox="0 0 20 20"><path d="M2.5 18.5 L4 14 L11.5 6.5 L14 9 L6.5 16.5 Z" fill="none" stroke="#bdbdbd" stroke-width="1.3"/><path d="M10 5 L15.5 10.5" stroke="#bdbdbd" stroke-width="2"/><circle cx="16" cy="4.5" r="2.8" fill="#bdbdbd"/><path d="M13 6.5 L16 3.5" stroke="#bdbdbd" stroke-width="3"/></svg>
<svg style="left:12px;top:297px;" width="20" height="20" viewBox="0 0 20 20"><path d="M2 19 L5 11 L13 3 L19 9 L11 17 Z" fill="none" stroke="#bdbdbd" stroke-width="1.3"/><path d="M9 7 L13 3 L19 9 L15 13 Q13 10 12 11 Q11 8 9 7 Z" fill="#bdbdbd"/><path d="M2 19 L7 14" stroke="#bdbdbd"/></svg>
<svg style="left:12px;top:324px;" width="20" height="14" viewBox="0 0 20 14"><path d="M10 1.5 L16 6.5 L10 11.5 L4 6.5 Z" fill="#bdbdbd"/><path d="M2.5 0.5 L17.5 12.5 M17.5 0.5 L2.5 12.5" stroke="#bdbdbd" stroke-width="1.1"/><path d="M2.5 0.5 L17.5 12.5 M17.5 0.5 L2.5 12.5" stroke="#3c3c3c" stroke-width="0.4"/></svg>
<svg style="left:12px;top:343px;" width="20" height="22" viewBox="0 0 20 22"><g fill="#bdbdbd"><rect x="1.0" y="1.0" width="1.2" height="1.2"/><rect x="1.0" y="3.4" width="1.2" height="1.2"/><rect x="1.0" y="5.8" width="1.2" height="1.2"/><rect x="1.0" y="8.2" width="1.2" height="1.2"/><rect x="3.4" y="1.0" width="1.2" height="1.2"/><rect x="3.4" y="3.4" width="1.2" height="1.2"/><rect x="3.4" y="5.8" width="1.2" height="1.2"/><rect x="3.4" y="8.2" width="1.2" height="1.2"/><rect x="5.8" y="1.0" width="1.2" height="1.2"/><rect x="5.8" y="3.4" width="1.2" height="1.2"/><rect x="5.8" y="5.8" width="1.2" height="1.2"/></g><rect x="11" y="5" width="3" height="4" fill="#bdbdbd"/><rect x="6.5" y="10.5" width="12" height="8" rx="3.5" fill="none" stroke="#bdbdbd" stroke-width="1.3"/><rect x="7" y="11" width="11" height="4" rx="1" fill="#bdbdbd"/></svg>
<svg style="left:12px;top:373px;" width="20" height="20" viewBox="0 0 20 20"><path d="M2 13 L11 3.5 L18 10 L11 18 L7 18 Z" fill="none" stroke="#bdbdbd" stroke-width="1.3"/><path d="M8 7 L11 3.5 L18 10 L14 14.5 Z" fill="#bdbdbd"/><path d="M11 18.5 H19" stroke="#bdbdbd" stroke-width="1.2"/></svg>
<svg style="left:12px;top:399px;" width="20" height="20" viewBox="0 0 20 20"><path d="M1.5 1.5 L8 4 V8 L1.5 10 Z M18.5 1.5 L12 4 V8 L18.5 10 Z" fill="#bdbdbd"/><rect x="8.5" y="3" width="3" height="6" fill="#bdbdbd"/><path d="M8.5 9 Q5 12 2.5 16.5 L5 16 L6 18 Q7.5 13 10 9.5 Q12.5 13 14 18 L15 16 L17.5 16.5 Q15 12 11.5 9" fill="#bdbdbd"/></svg>
<svg style="left:12px;top:424px" width="20" height="18" viewBox="0 0 20 18"><defs><linearGradient id="gbd" x1="0" x2="1"><stop offset="0" stop-color="#cfcfcf"/><stop offset="0.5" stop-color="#6e6e6e"/><stop offset="1" stop-color="#cfcfcf"/></linearGradient></defs><path d="M6 1 Q9 5 10 6 Q11 5 14 1 Q19 7 18.5 11 Q18 16 14 16.5 Q11.5 16.8 10 14.5 Q8.5 16.8 6 16.5 Q2 16 1.5 11 Q1 7 6 1 Z" fill="url(#gbd)" stroke="#bdbdbd" stroke-width="1"/></svg>
<svg style="left:12px;top:448px;" width="20" height="20" viewBox="0 0 20 20"><rect x="1.5" y="1.5" width="17" height="16" rx="3" fill="none" stroke="#bdbdbd" stroke-width="1.3"/><path d="M1.5 6.5 H18.5 M1.5 12.5 H18.5 M6.5 1.5 V17.5 M10 1.5 Q16 9.5 10 17.5" fill="none" stroke="#bdbdbd" stroke-width="1.1"/></svg>
<svg style="left:12px;top:476px;" width="20" height="20" viewBox="0 0 20 20"><path d="M10 1.5 L18.5 10 L10 18.5 L3.5 12 Q1 13 1.5 16 Q-0.5 12 3 10 Z" fill="#bdbdbd"/><path d="M5 8 L10 3 L15 8 Z" fill="#3c3c3c"/></svg>
<svg style="left:13px;top:502px" width="18" height="18" viewBox="0 0 18 18"><defs><linearGradient id="ggr" x1="0" y1="0" x2="1" y2="1"><stop offset="0" stop-color="#5e5e5e"/><stop offset="1" stop-color="#dcdcdc"/></linearGradient></defs><rect x="1" y="1" width="16" height="16" rx="2" fill="url(#ggr)" stroke="#bdbdbd" stroke-width="1"/></svg>
<svg style="left:12px;top:526px;" width="20" height="20" viewBox="0 0 20 20"><path d="M3.5 4 Q3.5 15 10 15 Q16.5 15 16.5 4" fill="none" stroke="#bdbdbd" stroke-width="1.2"/><rect x="1" y="1.5" width="5" height="5" fill="#bdbdbd"/><rect x="14" y="1.5" width="5" height="5" fill="#bdbdbd"/><rect x="7.5" y="12.5" width="5" height="5" fill="#bdbdbd"/><path d="M0 15 H20" stroke="#bdbdbd" stroke-width="0.8" stroke-dasharray="1.5 1"/></svg>
<svg style="left:12px;top:552px;" width="20" height="20" viewBox="0 0 20 20"><rect x="2.5" y="1.5" width="15" height="15" rx="2.5" fill="none" stroke="#bdbdbd" stroke-width="1.3"/><path d="M2.5 7 H17.5 M2.5 11.5 H17.5 M11.5 7 L10 16.5" fill="none" stroke="#bdbdbd" stroke-width="1.1"/></svg>
<svg style="left:12px;top:577px;" width="20" height="20" viewBox="0 0 20 20"><path d="M2.5 2 H19 L2.5 19 Z" fill="none" stroke="#bdbdbd" stroke-width="2.6" stroke-linejoin="miter"/></svg>
<svg style="left:12px;top:600px;" width="20" height="21" viewBox="0 0 20 21"><path d="M2.5 20 L10 1 L17.5 20 M5.2 13 H14.8" fill="none" stroke="#bdbdbd" stroke-width="2.4"/></svg>
<svg style="left:12px;top:626px;" width="20" height="20" viewBox="0 0 20 20"><path d="M2 2 Q10 2 12 6 Q10 12 2 16 Q7 12 7.5 7 Q5 4 2 2 Z" fill="none" stroke="#bdbdbd" stroke-width="1.3"/><path d="M8 1.5 H18.5 V9.5" fill="none" stroke="#bdbdbd" stroke-width="1" stroke-dasharray="1.5 1.2"/></svg>
<svg style="left:12px;top:651px;" width="20" height="20" viewBox="0 0 20 20"><rect x="1" y="1" width="5" height="5" fill="#bdbdbd"/><path d="M3.5 6 V19 M6 3.5 H19" stroke="#bdbdbd" stroke-width="1.2"/><path d="M8 7 L19 12.5 L14 13.5 L12.5 19 Z" fill="#bdbdbd"/></svg>
<div class="a" style="left:1711px;top:69px;width:42px;height:969px;background:#363636;"></div>
<div class="a" style="left:1750px;top:69px;width:3px;height:969px;background:#2f2f2f;"></div>
<div class="a" style="left:1716px;top:71px;width:32px;height:30px;background:#4d4d4d;"></div>
<svg style="left:1716px;top:71px;" width="32" height="30" viewBox="0 0 32 30"><circle cx="16" cy="15.5" r="7" fill="none" stroke="#bdbdbd" stroke-width="1.3"/><path d="M13 12.5 L20.5 20 M13 12.5 V17 M13 12.5 H17.5" fill="none" stroke="#bdbdbd" stroke-width="2"/><path d="M20 20 L23 21.5" stroke="#bdbdbd" stroke-width="1.3"/></svg>
<div class="a" style="left:1716px;top:107px;width:32px;height:30px;background:#4d4d4d;"></div>
<svg style="left:1716px;top:107px;" width="32" height="30" viewBox="0 0 32 30"><g transform="translate(7 7)"><path d="M1.5 3.5 V1.5 H7 L8.5 3.5 H16.5 V15.5 H1.5 Z" fill="none" stroke="#bdbdbd" stroke-width="1.1"/><path d="M1.5 3.5 H8.5" stroke="#bdbdbd" stroke-width="1.1"/><path d="M9 5.5 L10.3 9 H14 L11 11 L12.2 14.5 L9 12.3 L5.8 14.5 L7 11 L4 9 H7.7 Z" fill="#bdbdbd"/></g></svg>
<div class="a" style="left:1716px;top:143px;width:32px;height:30px;background:#4d4d4d;"></div>
<svg style="left:1716px;top:143px;" width="32" height="30" viewBox="0 0 32 30"><g transform="translate(7 7)"><path d="M1.5 3.5 V1.5 H7 L8.5 3.5 H16.5 V15.5 H1.5 Z" fill="none" stroke="#bdbdbd" stroke-width="1.1"/><path d="M1.5 3.5 H8.5" stroke="#bdbdbd" stroke-width="1.1"/><path d="M9 5 V12 M6 9 L9 12 L12 9 M4.5 13.5 H13.5" fill="none" stroke="#bdbdbd" stroke-width="1.3"/></g></svg>
<div class="a" style="left:1716px;top:179px;width:32px;height:30px;background:#4d4d4d;"></div>
<svg style="left:1716px;top:179px;" width="32" height="30" viewBox="0 0 32 30"><g transform="translate(7 7)"><path d="M1.5 3.5 V1.5 H7 L8.5 3.5 H16.5 V15.5 H1.5 Z" fill="none" stroke="#bdbdbd" stroke-width="1.1"/><path d="M1.5 3.5 H8.5" stroke="#bdbdbd" stroke-width="1.1"/><path d="M4 5.5 L14 14 M14 5.5 L4 14" stroke="#bdbdbd" stroke-width="2.5"/></g></svg>
<div class="a" style="left:1716px;top:215px;width:32px;height:30px;background:#4d4d4d;"></div>
<svg style="left:1716px;top:215px;" width="32" height="30" viewBox="0 0 32 30"><g transform="translate(7 7)"><path d="M1.5 3.5 V1.5 H7 L8.5 3.5 H16.5 V15.5 H1.5 Z" fill="none" stroke="#bdbdbd" stroke-width="1.1"/><path d="M1.5 3.5 H8.5" stroke="#bdbdbd" stroke-width="1.1"/><g fill="#bdbdbd"><rect x="4.0" y="5.5" width="1.2" height="1.2"/><rect x="4.0" y="9.1" width="1.2" height="1.2"/><rect x="4.0" y="12.7" width="1.2" height="1.2"/><rect x="5.8" y="7.3" width="1.2" height="1.2"/><rect x="5.8" y="10.9" width="1.2" height="1.2"/><rect x="7.6" y="5.5" width="1.2" height="1.2"/><rect x="7.6" y="9.1" width="1.2" height="1.2"/><rect x="7.6" y="12.7" width="1.2" height="1.2"/><rect x="9.4" y="7.3" width="1.2" height="1.2"/><rect x="9.4" y="10.9" width="1.2" height="1.2"/><rect x="11.2" y="5.5" width="1.2" height="1.2"/><rect x="11.2" y="9.1" width="1.2" height="1.2"/><rect x="11.2" y="12.7" width="1.2" height="1.2"/><rect x="13.0" y="7.3" width="1.2" height="1.2"/><rect x="13.0" y="10.9" width="1.2" height="1.2"/></g></g></svg>
<div class="a" style="left:1716px;top:251px;width:32px;height:30px;background:#4d4d4d;"></div>
<svg style="left:1716px;top:251px;" width="32" height="30" viewBox="0 0 32 30"><g transform="translate(7 7)"><path d="M1.5 3.5 V1.5 H7 L8.5 3.5 H16.5 V15.5 H1.5 Z" fill="none" stroke="#bdbdbd" stroke-width="1.1"/><path d="M1.5 3.5 H8.5" stroke="#bdbdbd" stroke-width="1.1"/><rect x="4" y="6" width="10" height="7" fill="none" stroke="#bdbdbd"/><path d="M4 8.5 H14 M9 8.5 V13" stroke="#bdbdbd"/></g></svg>
<div class="a" style="left:1716px;top:287px;width:32px;height:30px;background:#4d4d4d;"></div>
<svg style="left:1716px;top:287px;" width="32" height="30" viewBox="0 0 32 30"><g transform="translate(7 7)"><path d="M1.5 3.5 V1.5 H7 L8.5 3.5 H16.5 V15.5 H1.5 Z" fill="none" stroke="#bdbdbd" stroke-width="1.1"/><path d="M1.5 3.5 H8.5" stroke="#bdbdbd" stroke-width="1.1"/><path d="M4.5 6 L7.5 9 M13.5 6 L10.5 9 M4.5 14 L7.5 11 M13.5 14 L10.5 11" stroke="#bdbdbd" stroke-width="1.2"/></g></svg>
<div class="a" style="left:1716px;top:323px;width:32px;height:30px;background:#4d4d4d;"></div>
<svg style="left:1716px;top:323px;" width="32" height="30" viewBox="0 0 32 30"><g transform="translate(7 7)"><path d="M1.5 3.5 V1.5 H7 L8.5 3.5 H16.5 V15.5 H1.5 Z" fill="none" stroke="#bdbdbd" stroke-width="1.1"/><path d="M1.5 3.5 H8.5" stroke="#bdbdbd" stroke-width="1.1"/><g fill="#bdbdbd"><rect x="4.5" y="6.0" width="1.6" height="1.6"/><rect x="4.5" y="9.0" width="1.6" height="1.6"/><rect x="4.5" y="12.0" width="1.6" height="1.6"/><rect x="7.5" y="6.0" width="1.6" height="1.6"/><rect x="7.5" y="9.0" width="1.6" height="1.6"/><rect x="7.5" y="12.0" width="1.6" height="1.6"/><rect x="10.5" y="6.0" width="1.6" height="1.6"/><rect x="10.5" y="9.0" width="1.6" height="1.6"/><rect x="10.5" y="12.0" width="1.6" height="1.6"/><rect x="13.5" y="6.0" width="1.6" height="1.6"/><rect x="13.5" y="9.0" width="1.6" height="1.6"/><rect x="13.5" y="12.0" width="1.6" height="1.6"/></g></g></svg>
<div class="a" style="left:1716px;top:359px;width:32px;height:30px;background:#4d4d4d;"></div>
<svg style="left:1716px;top:359px;" width="32" height="30" viewBox="0 0 32 30"><g transform="translate(7 7)"><path d="M1.5 3.5 V1.5 H7 L8.5 3.5 H16.5 V15.5 H1.5 Z" fill="none" stroke="#bdbdbd" stroke-width="1.1"/><path d="M1.5 3.5 H8.5" stroke="#bdbdbd" stroke-width="1.1"/><circle cx="6.5" cy="7.5" r="1.3" fill="#bdbdbd"/><path d="M4.5 14 V10 H8.5 V14" fill="#bdbdbd"/><path d="M10.5 14 V8 Q12 5.5 13.5 8 V14" fill="none" stroke="#bdbdbd"/></g></svg>
<div class="a" style="left:1716px;top:395px;width:32px;height:30px;background:#4d4d4d;"></div>
<svg style="left:1716px;top:395px;" width="32" height="30" viewBox="0 0 32 30"><g transform="translate(7 7)"><path d="M1.5 3.5 V1.5 H7 L8.5 3.5 H16.5 V15.5 H1.5 Z" fill="none" stroke="#bdbdbd" stroke-width="1.1"/><path d="M1.5 3.5 H8.5" stroke="#bdbdbd" stroke-width="1.1"/><circle cx="9" cy="9.5" r="4.5" fill="none" stroke="#bdbdbd"/><path d="M4.5 9.5 H13.5 M9 5 V14" stroke="#bdbdbd"/></g></svg>
<div class="a" style="left:1716px;top:431px;width:32px;height:30px;background:#4d4d4d;"></div>
<svg style="left:1716px;top:431px;" width="32" height="30" viewBox="0 0 32 30"><g transform="translate(7 7)"><path d="M1.5 3.5 V1.5 H7 L8.5 3.5 H16.5 V15.5 H1.5 Z" fill="none" stroke="#bdbdbd" stroke-width="1.1"/><path d="M1.5 3.5 H8.5" stroke="#bdbdbd" stroke-width="1.1"/><circle cx="9" cy="6.5" r="1.3" fill="#bdbdbd"/><path d="M5 8.5 H13 M9 8.5 V11 M7 14.5 L9 11 L11 14.5" fill="none" stroke="#bdbdbd" stroke-width="1.4"/></g></svg>
<div class="a" style="left:1753px;top:69px;width:167px;height:971px;background:#2e2e2e;"></div>
<div class="a" style="left:1753px;top:69px;width:166px;height:17px;background:#393939;"></div>
<div class="a" style="left:1772px;top:72px;width:56px;height:14px;background:#4d4d4d;"></div>
<div class="a" style="left:1829px;top:72px;width:29px;height:13px;background:#474747;"></div>
<div class="a" style="left:1859px;top:72px;width:29px;height:13px;background:#474747;"></div>
<div class="a" style="left:1889px;top:72px;width:29px;height:13px;background:#474747;"></div>
<div class="a" style="left:1753px;top:86px;width:166px;height:5px;background:#4d4d4d;"></div>
<svg style="left:1759px;top:75px;" width="8" height="7" viewBox="0 0 8 7"><path d="M0 0.5 H8 M0 3.5 H8 M0 6.5 H8" stroke="#9c9c9c" stroke-width="1"/></svg>
<svg style="left:1772px;top:69px;" width="148" height="22" viewBox="0 0 148 22"><rect x="4.5" y="6.5" width="11" height="9" rx="1.5" fill="none" stroke="#bdbdbd"/><rect x="7.5" y="3.5" width="11" height="9" rx="1.5" fill="#4d4d4d" stroke="#bdbdbd"/><rect x="9" y="5" width="8" height="6" fill="#8a8a8a"/><rect x="67.5" y="5" width="11" height="11" rx="1" fill="none" stroke="#8a8a8a"/><path d="M69 14.5 L72 12 L74 13 L77 10 V15 H69 Z" fill="#6f6f6f"/><path d="M97.5 16 V13 A6 6 0 0 1 109.5 13 V16 M98 12 H109" fill="none" stroke="#8a8a8a"/><path d="M127.5 16 A6 6 0 1 1 139.5 16" fill="none" stroke="#8a8a8a"/><path d="M133.5 10 V16" stroke="#8a8a8a" stroke-width="1.5"/><circle cx="133.5" cy="8" r="0.9" fill="#8a8a8a"/></svg>
<div class="t" style="left:1800.6px;top:75.7px;font-size:11px;color:#cfcfcf;transform:scaleX(0.93);-webkit-mask-image:linear-gradient(to right,#000 60%,rgba(0,0,0,0.3));mask-image:linear-gradient(to right,#000 60%,rgba(0,0,0,0.3))">Navig</div>
<div class="a" style="left:1753px;top:92px;width:166px;height:160px;background:#2d2d2d;"></div>
<div class="a" style="left:1772px;top:92px;width:129px;height:159px;background:#ffffff;"></div>
<div class="a" style="left:1753px;top:252px;width:166px;height:43px;background:#4a4a4a;"></div>
<div class="a" style="left:1757px;top:259px;width:45px;height:12px;background:#3a3a3a;border:1px solid #5a5a5a"></div>
<svg style="left:1757px;top:259px" width="45" height="12"><path d="M24 11 L44 2 V11 Z" fill="#2c2c2c"/></svg>
<div class="a" style="left:1772px;top:255px;width:4px;height:36px;background:#5f5f5f;"></div>
<div class="a" style="left:1757px;top:279px;width:45px;height:12px;background:#3a3a3a;border:1px solid #5a5a5a"></div>
<svg style="left:1757px;top:279px" width="45" height="12"><path d="M1 1 L8 10 H1 Z M30 1 L44 11 H24 Z" fill="#2c2c2c"/></svg>
<div class="a" style="left:1774px;top:275px;width:4px;height:20px;background:#5f5f5f;"></div>
<div class="t" style="left:1759.70px;top:260.57px;font-size:11.5px;color:#e4e4e4;transform:scaleX(0.8937);">36.7</div>
<div class="t" style="left:1762.00px;top:280.57px;font-size:11.5px;color:#e4e4e4;transform:scaleX(0.9384);">0.0</div>
<svg style="left:1816px;top:255px;" width="104" height="40" viewBox="0 0 104 40"><circle cx="9" cy="10.5" r="7" fill="none" stroke="#bdbdbd" stroke-width="1.1"/><path d="M5 10.5 H13" stroke="#bdbdbd" stroke-width="1.2"/><circle cx="29" cy="10.5" r="7" fill="none" stroke="#bdbdbd" stroke-width="1.1"/><path d="M25 10.5 H33 M29 6.5 V14.5" stroke="#bdbdbd" stroke-width="1.2"/><circle cx="49" cy="10.5" r="7" fill="none" stroke="#bdbdbd" stroke-width="1.1"/><rect x="46" y="7.5" width="6" height="6" rx="1" fill="#bdbdbd"/><path d="M61.5 3 V18" stroke="#6a6a6a"/><path d="M88 3 V18" stroke="#6a6a6a" transform="translate(-27 20)"/><path d="M67.5 3.5 H73.5 V9.5 H67.5 Z M73.5 9.5 H80.5 V16.5 H73.5" fill="none" stroke="#bdbdbd" stroke-width="1.1"/><path d="M70 6 L78 14" stroke="#bdbdbd" stroke-width="1.1"/><rect x="88.5" y="4" width="11" height="11" rx="1.5" fill="none" stroke="#bdbdbd" stroke-width="1.1"/><path d="M91 6.5 L97 12.5" stroke="#bdbdbd" stroke-width="1.1"/><path d="M14.5 32 A6 6 0 1 0 6 27" fill="none" stroke="#bdbdbd" stroke-width="1.1"/><path d="M3 25 L6.5 29.5 L9 25 Z" fill="#bdbdbd"/><path d="M23.5 32 A6 6 0 1 1 32 27" fill="none" stroke="#bdbdbd" stroke-width="1.1"/><path d="M35 25 L31.5 29.5 L29 25 Z" fill="#bdbdbd"/><path d="M46 24 A6.5 6.5 0 1 0 49 23" fill="none" stroke="#bdbdbd" stroke-width="1.1" /><circle cx="49" cy="29.5" r="1.8" fill="#bdbdbd"/><path d="M49 24 V29" stroke="#bdbdbd"/><path d="M61.5 23 V38" stroke="#6a6a6a"/><path d="M66.5 25 L70.5 29.5 L66.5 34 Z" fill="none" stroke="#bdbdbd"/><path d="M73 23 V36" stroke="#bdbdbd"/><path d="M80 25 L76 29.5 L80 34 Z" fill="#bdbdbd"/><path d="M88 23 H99 L93.5 27.5 Z" fill="#bdbdbd"/><path d="M87.5 29.5 H100" stroke="#bdbdbd"/><path d="M88.5 36 H98.5 L93.5 31.5 Z" fill="none" stroke="#bdbdbd"/></svg>
<div class="a" style="left:1753px;top:298px;width:166px;height:16px;background:#393939;"></div>
<div class="a" style="left:1772px;top:300px;width:29px;height:14px;background:#474747;"></div>
<div class="a" style="left:1802px;top:300px;width:85px;height:14px;background:#4d4d4d;"></div>
<div class="a" style="left:1888px;top:300px;width:29px;height:14px;background:#474747;"></div>
<svg style="left:1759px;top:303px;" width="8" height="7" viewBox="0 0 8 7"><path d="M0 0.5 H8 M0 3.5 H8 M0 6.5 H8" stroke="#9c9c9c" stroke-width="1"/></svg>
<svg style="left:1772px;top:298px;" width="148" height="20" viewBox="0 0 148 20"><path d="M8 10 L14.5 7 L21 10 L14.5 13 Z M8 12.5 L14.5 15.5 L21 12.5" fill="none" stroke="#7a7a7a"/><path d="M36 9 L43 6 L50 9 L43 12 Z M36 11.5 L43 14.5 L50 11.5 M36 14 L43 17 L46 16" fill="none" stroke="#bdbdbd" stroke-width="1.1"/><path d="M45 13 H52 L49.5 16 V20 H47.5 V16 Z" fill="#bdbdbd"/><path d="M127 16 A6 6 0 1 1 138 14" fill="none" stroke="#7a7a7a"/><path d="M127 16 L134 9 L136 16 Z" fill="#7a7a7a"/></svg>
<div class="t" style="left:1830.00px;top:303.39px;font-size:11px;color:#dcdcdc;transform:scaleX(0.8056);">Search Layer</div>
<div class="a" style="left:1753px;top:314px;width:166px;height:51px;background:#4f4f4f;"></div>
<div class="a" style="left:1754px;top:319px;width:87px;height:19px;background:#5d5d5d;border-radius:3px;border:1px solid #777"></div>
<div class="a" style="left:1843px;top:319px;width:36px;height:19px;background:#555555;border-radius:3px"></div>
<div class="a" style="left:1882px;top:319px;width:36px;height:19px;background:#555555;border-radius:3px"></div>
<svg style="left:1754px;top:319px;" width="166" height="19" viewBox="0 0 166 19"><circle cx="10" cy="8" r="5.5" fill="none" stroke="#bdbdbd" stroke-width="1.2"/><path d="M14 12 L18 16" stroke="#bdbdbd" stroke-width="1.6"/><path d="M77 8 L80.5 11.5 L84 8" fill="none" stroke="#bdbdbd" stroke-width="1.2"/><circle cx="98" cy="8" r="5" fill="none" stroke="#7a7a7a"/><circle cx="102" cy="13" r="3" fill="#555" stroke="#7a7a7a"/><path d="M107 8 L110 11 L113 8" fill="none" stroke="#7a7a7a"/><circle cx="137" cy="8" r="5" fill="none" stroke="#7a7a7a"/><path d="M139 11 L144 16 M144 11 L139 16" stroke="#7a7a7a"/><path d="M146 8 L149 11 L152 8" fill="none" stroke="#7a7a7a"/></svg>
<div class="t" style="left:1778px;top:322.5px;font-size:11px;color:#dedede;transform:scaleX(0.82);-webkit-mask-image:linear-gradient(to right,#000 70%,rgba(0,0,0,0.2));mask-image:linear-gradient(to right,#000 70%,rgba(0,0,0,0.2))">Show these l</div>
<svg style="left:1902px;top:344px;" width="14" height="16" viewBox="0 0 14 16"><path d="M1 3.5 H13 M4.5 3.5 V1.5 H9.5 V3.5 M2.5 4 L3.5 15 H10.5 L11.5 4 M5 6 V13 M7 6 V13 M9 6 V13" fill="none" stroke="#777"/></svg>
<div class="a" style="left:1753px;top:365px;width:166px;height:1px;background:#333333;"></div>
<div class="a" style="left:1754px;top:366px;width:164px;height:168px;background:#4f4f4f;"></div>
<div class="a" style="left:1753px;top:534px;width:166px;height:6px;background:#2e2e2e;"></div>
<div class="a" style="left:1753px;top:540px;width:166px;height:14px;background:#393939;"></div>
<div class="a" style="left:1772px;top:540px;width:54px;height:14px;background:#4d4d4d;"></div>
<div class="a" style="left:1827px;top:540px;width:29px;height:14px;background:#474747;"></div>
<div class="a" style="left:1857px;top:540px;width:29px;height:14px;background:#474747;"></div>
<svg style="left:1759px;top:543px;" width="8" height="7" viewBox="0 0 8 7"><path d="M0 0.5 H8 M0 3.5 H8 M0 6.5 H8" stroke="#9c9c9c" stroke-width="1"/></svg>
<svg style="left:1772px;top:538px;" width="120" height="20" viewBox="0 0 120 20"><path d="M3 7 L9 4 L15 7 L9 10 Z M3 10 L9 13 L15 10 M3 13 L9 16 L15 13" fill="none" stroke="#bdbdbd" stroke-width="1.1"/><path d="M67 10 H60 Q56 10 56 13.5 Q56 17 60 17 H66" fill="none" stroke="#7a7a7a" stroke-width="1.1"/><path d="M64 7.5 L60 10 L64 12.5" fill="none" stroke="#7a7a7a" stroke-width="1.1"/><path d="M88 9 L103 5 M88 10 V17 M102 10 V17 M88 10 H102" fill="none" stroke="#7a7a7a"/></svg>
<div class="t" style="left:1800.30px;top:544.49px;font-size:11px;color:#dcdcdc;transform:scaleX(0.7887);">Layer</div>
<div class="a" style="left:1753px;top:554px;width:166px;height:72px;background:#4f4f4f;"></div>
<div class="a" style="left:1754px;top:559px;width:39px;height:20px;background:#555555;border-radius:3px;border:1px solid #666"></div>
<div class="a" style="left:1796px;top:559px;width:40px;height:20px;background:#5a5a5a;border-radius:3px;border:1px solid #6a6a6a"></div>
<svg style="left:1754px;top:559px;" width="166" height="20" viewBox="0 0 166 20"><rect x="4.5" y="4" width="15" height="12" rx="2.5" fill="none" stroke="#aaa" stroke-width="1.1"/><path d="M27 8 L30 11 L33 8" fill="none" stroke="#bdbdbd"/><path d="M72 8 L75 11 L78 8" fill="none" stroke="#bdbdbd"/><rect x="89" y="4" width="4" height="4" fill="#e8e8e8"/><rect x="89" y="8" width="4" height="4" fill="#b8b8b8"/><rect x="93" y="8" width="4" height="4" fill="#e8e8e8"/><rect x="93" y="4" width="4" height="4" fill="#b8b8b8"/><rect x="97" y="4" width="4" height="4" fill="#e8e8e8"/><rect x="97" y="8" width="4" height="4" fill="#b8b8b8"/><rect x="101" y="8" width="4" height="4" fill="#e8e8e8"/><rect x="101" y="4" width="4" height="4" fill="#b8b8b8"/><rect x="105" y="4" width="4" height="4" fill="#e8e8e8"/><rect x="105" y="8" width="4" height="4" fill="#b8b8b8"/><rect x="109" y="8" width="4" height="4" fill="#e8e8e8"/><rect x="109" y="4" width="4" height="4" fill="#b8b8b8"/><rect x="113" y="4" width="4" height="4" fill="#e8e8e8"/><rect x="113" y="8" width="4" height="4" fill="#b8b8b8"/><rect x="117" y="8" width="4" height="4" fill="#e8e8e8"/><rect x="117" y="4" width="4" height="4" fill="#b8b8b8"/><rect x="121" y="4" width="4" height="4" fill="#e8e8e8"/><rect x="121" y="8" width="4" height="4" fill="#b8b8b8"/><rect x="125" y="-1" width="3" height="21" fill="#8a8a8a"/><path d="M154 6 L157 3 L160 6 M154 13 L157 16 L160 13" fill="none" stroke="#bdbdbd"/></svg>
<div class="t" style="left:1798.6px;top:563.2px;font-size:11px;color:#e0e0e0;transform:scaleX(0.8);-webkit-mask-image:linear-gradient(to right,#000 65%,rgba(0,0,0,0.3));mask-image:linear-gradient(to right,#000 65%,rgba(0,0,0,0.3))">Norma</div>
<div class="t" style="left:1887.30px;top:562.77px;font-size:11.5px;color:#e0e0e0;transform:scaleX(0.8965);">100</div>
<div class="a" style="left:1856px;top:581px;width:28px;height:19px;background:#545454;border-radius:2px"></div>
<div class="a" style="left:1886px;top:581px;width:32px;height:19px;background:#545454;border-radius:2px"></div>
<svg style="left:1754px;top:580px;" width="166" height="46" viewBox="0 0 166 46"><rect x="2" y="5" width="9" height="9" rx="2" fill="#6f6f6f"/><rect x="4.5" y="2.5" width="9" height="9" rx="1.5" fill="#b0b0b0" stroke="#bdbdbd" stroke-dasharray="1.5 1"/><path d="M24 4 V16 M20 4.5 H28 M20 8 L28 8 M21 16 H27 L25.5 8.5 H22.5 Z" fill="none" stroke="#bdbdbd" stroke-width="1.1"/><circle cx="24" cy="6" r="1.5" fill="#bdbdbd"/><path d="M38 3 H43 V11 L40.5 14 L38 11 Z" fill="#bdbdbd"/><path d="M41 14 Q44 16 46 14" fill="none" stroke="#bdbdbd" stroke-width="1.2"/><path d="M57.5 8 V5.5 A3.5 3.5 0 0 1 64.5 5.5 V8" fill="none" stroke="#bdbdbd" stroke-width="1.3"/><rect x="55.5" y="8" width="11" height="8" rx="1.5" fill="#bdbdbd"/><g fill="#777"><rect x="72" y="11" width="6" height="6" rx="1"/><rect x="74" y="2" width="3" height="3"/><rect x="80" y="2" width="3" height="3"/><rect x="77" y="5" width="3" height="3"/><rect x="80" y="8" width="3" height="3"/><rect x="77" y="11" width="3" height="3"/><rect x="80" y="14" width="3" height="3"/></g><path d="M108 10 A5 5 0 1 1 108 9" fill="none" stroke="#7a7a7a" stroke-width="2.5"/><path d="M106 11 L112 17 M112 11 L106 17" stroke="#6a6a6a"/><path d="M115 6 L118 9 L121 6" fill="none" stroke="#888"/><path d="M136 3 L147 3 L136 14 Z" fill="#7a7a7a"/><path d="M140 11 L146 17 M146 11 L140 17" stroke="#6a6a6a"/><path d="M150 6 L153 9 L156 6" fill="none" stroke="#888"/><rect x="7" y="26.5" width="11" height="11" rx="1" fill="none" stroke="#bdbdbd"/><path d="M7 34 L10 37.5" stroke="#bdbdbd"/><circle cx="18" cy="38.5" r="3.5" fill="#4f4f4f" stroke="#bdbdbd"/><path d="M18 36.5 V40.5 M16 38.5 H20" stroke="#bdbdbd"/><rect x="27" y="26.5" width="11" height="11" rx="1" fill="none" stroke="#bdbdbd"/><circle cx="32.5" cy="31.5" r="3" fill="none" stroke="#bdbdbd"/><circle cx="38" cy="38.5" r="3.5" fill="#4f4f4f" stroke="#bdbdbd"/><path d="M38 36.5 V40.5 M36 38.5 H40" stroke="#bdbdbd"/><path d="M47 27 H52 L53.5 28.5 H59 V37 H47 Z" fill="#bdbdbd"/><circle cx="58" cy="38.5" r="3.5" fill="#4f4f4f" stroke="#bdbdbd"/><path d="M58 36.5 V40.5 M56 38.5 H60" stroke="#bdbdbd"/><rect x="73.5" y="26" width="8" height="8" fill="none" stroke="#777"/><rect x="67.5" y="31" width="8" height="8" fill="none" stroke="#777"/><rect x="75" y="27.5" width="5" height="5" fill="#777"/><rect x="93.5" y="26" width="8" height="8" fill="none" stroke="#777"/><rect x="87.5" y="31" width="8" height="8" fill="none" stroke="#777"/><path d="M89 38 L94 33" stroke="#777"/><rect x="107" y="26" width="13" height="13" rx="2" fill="#bdbdbd"/><circle cx="113.5" cy="32.5" r="3.5" fill="#4f4f4f"/><rect x="127.5" y="26.5" width="9" height="11" rx="1" fill="none" stroke="#777"/><rect x="130.5" y="29" width="9" height="9" rx="1.5" fill="#777"/><circle cx="135" cy="33.5" r="2" fill="#4f4f4f"/><path d="M147 28 H159 M150.5 28 V26 H155.5 V28 M148.5 28.5 L149.5 39 H156.5 L157.5 28.5 M151 30.5 V37 M153 30.5 V37 M155 30.5 V37" fill="none" stroke="#bdbdbd"/></svg>
<div class="a" style="left:1753px;top:626px;width:166px;height:412px;background:#404040;"></div>
<div class="a" style="left:1906px;top:626px;width:13px;height:412px;background:#434343;"></div>
<div class="a" style="left:1754px;top:657px;width:152px;height:1px;background:#262626;"></div>
<svg style="left:1754px;top:626px;" width="152" height="31" viewBox="0 0 152 31"><path d="M2 17 Q9 9 16 17" fill="none" stroke="#bdbdbd" stroke-width="1.2"/><circle cx="9" cy="16.5" r="3.2" fill="#bdbdbd"/><rect x="24" y="10.5" width="11" height="11" rx="2.5" fill="#3a3a3a" stroke="#333"/><path d="M44.5 12 L48.5 16 L44.5 20" fill="none" stroke="#bdbdbd" stroke-width="1.2"/><path d="M56 10 H61.5 L63 11.5 H70 V22 H56 Z" fill="#bdbdbd"/><path d="M56 12.5 H70" stroke="#404040" stroke-width="0.8"/></svg>
<div class="t" style="left:1836.50px;top:631.49px;font-size:11px;color:#e2e2e2;transform:scaleX(0.9083);">100 % Normal</div>
<div class="t" style="left:1836.50px;top:643.19px;font-size:11px;color:#e2e2e2;transform:scaleX(0.9700);">Folder 1</div>
<div class="a" style="left:1754px;top:688px;width:152px;height:1px;background:#262626;"></div>
<svg style="left:1754px;top:657px;" width="152" height="31" viewBox="0 0 152 31"><path d="M2 17 Q9 9 16 17" fill="none" stroke="#bdbdbd" stroke-width="1.2"/><circle cx="9" cy="16.5" r="3.2" fill="#bdbdbd"/><rect x="24" y="10.5" width="11" height="11" rx="2.5" fill="#3a3a3a" stroke="#333"/><path d="M44.5 12 L48.5 16 L44.5 20" fill="none" stroke="#bdbdbd" stroke-width="1.2"/><path d="M56 10 H61.5 L63 11.5 H70 V22 H56 Z" fill="#bdbdbd"/><path d="M56 12.5 H70" stroke="#404040" stroke-width="0.8"/></svg>
<div class="t" style="left:1836.50px;top:662.49px;font-size:11px;color:#e2e2e2;transform:scaleX(0.9083);">100 % Normal</div>
<div class="t" style="left:1836.50px;top:674.19px;font-size:11px;color:#e2e2e2;transform:scaleX(0.9700);">Folder 7</div>
<div class="a" style="left:1754px;top:719px;width:152px;height:1px;background:#262626;"></div>
<svg style="left:1754px;top:688px;" width="152" height="31" viewBox="0 0 152 31"><path d="M2 17 Q9 9 16 17" fill="none" stroke="#bdbdbd" stroke-width="1.2"/><circle cx="9" cy="16.5" r="3.2" fill="#bdbdbd"/><rect x="24" y="10.5" width="11" height="11" rx="2.5" fill="#3a3a3a" stroke="#333"/><path d="M44.5 12 L48.5 16 L44.5 20" fill="none" stroke="#bdbdbd" stroke-width="1.2"/><path d="M56 10 H61.5 L63 11.5 H70 V22 H56 Z" fill="#bdbdbd"/><path d="M56 12.5 H70" stroke="#404040" stroke-width="0.8"/></svg>
<div class="t" style="left:1836.50px;top:693.49px;font-size:11px;color:#e2e2e2;transform:scaleX(0.9083);">100 % Normal</div>
<div class="t" style="left:1836.50px;top:705.19px;font-size:11px;color:#e2e2e2;transform:scaleX(0.9700);">Folder 6</div>
<div class="a" style="left:1754px;top:750px;width:152px;height:1px;background:#262626;"></div>
<svg style="left:1754px;top:719px;" width="152" height="31" viewBox="0 0 152 31"><path d="M2 17 Q9 9 16 17" fill="none" stroke="#bdbdbd" stroke-width="1.2"/><circle cx="9" cy="16.5" r="3.2" fill="#bdbdbd"/><rect x="24" y="10.5" width="11" height="11" rx="2.5" fill="#3a3a3a" stroke="#333"/><path d="M44.5 12 L48.5 16 L44.5 20" fill="none" stroke="#bdbdbd" stroke-width="1.2"/><path d="M56 10 H61.5 L63 11.5 H70 V22 H56 Z" fill="#bdbdbd"/><path d="M56 12.5 H70" stroke="#404040" stroke-width="0.8"/></svg>
<div class="t" style="left:1836.50px;top:724.49px;font-size:11px;color:#e2e2e2;transform:scaleX(0.9083);">100 % Normal</div>
<div class="t" style="left:1836.50px;top:736.19px;font-size:11px;color:#e2e2e2;transform:scaleX(0.9700);">Folder 3</div>
<div class="a" style="left:1754px;top:781px;width:152px;height:1px;background:#262626;"></div>
<svg style="left:1754px;top:750px;" width="152" height="31" viewBox="0 0 152 31"><path d="M2 17 Q9 9 16 17" fill="none" stroke="#bdbdbd" stroke-width="1.2"/><circle cx="9" cy="16.5" r="3.2" fill="#bdbdbd"/><rect x="24" y="10.5" width="11" height="11" rx="2.5" fill="#3a3a3a" stroke="#333"/><path d="M44.5 12 L48.5 16 L44.5 20" fill="none" stroke="#bdbdbd" stroke-width="1.2"/><path d="M56 10 H61.5 L63 11.5 H70 V22 H56 Z" fill="#bdbdbd"/><path d="M56 12.5 H70" stroke="#404040" stroke-width="0.8"/></svg>
<div class="t" style="left:1836.50px;top:755.49px;font-size:11px;color:#e2e2e2;transform:scaleX(0.9083);">100 % Normal</div>
<div class="t" style="left:1836.50px;top:767.19px;font-size:11px;color:#e2e2e2;transform:scaleX(0.9700);">Folder 4</div>
<div class="a" style="left:1792px;top:782px;width:114px;height:30px;background:#66718c;"></div>
<div class="a" style="left:1754px;top:812px;width:152px;height:1px;background:#262626;"></div>
<svg style="left:1754px;top:781px;" width="152" height="31" viewBox="0 0 152 31"><path d="M2 17 Q9 9 16 17" fill="none" stroke="#bdbdbd" stroke-width="1.2"/><circle cx="9" cy="16.5" r="3.2" fill="#bdbdbd"/><path d="M24 23 L26 18.5 L33 11.5 L34.5 13 L27.5 20 Z" fill="#bdbdbd"/><path d="M24 24.5 H36" stroke="#bdbdbd"/><path d="M44.5 12 L48.5 16 L44.5 20" fill="none" stroke="#bdbdbd" stroke-width="1.2"/><path d="M56 10 H61.5 L63 11.5 H70 V22 H56 Z" fill="#bdbdbd"/><path d="M56 12.5 H70" stroke="#66718c" stroke-width="0.8"/></svg>
<div class="t" style="left:1836.50px;top:786.49px;font-size:11px;color:#e2e2e2;transform:scaleX(0.9083);">100 % Normal</div>
<div class="t" style="left:1836.50px;top:798.19px;font-size:11px;color:#e2e2e2;transform:scaleX(0.9700);">Folder 2</div>
<div class="a" style="left:1754px;top:843px;width:152px;height:1px;background:#262626;"></div>
<svg style="left:1754px;top:812px;" width="152" height="31" viewBox="0 0 152 31"><rect x="4" y="10.5" width="11" height="11" rx="2" fill="#3c3c3c" stroke="#363636"/><rect x="24" y="10.5" width="11" height="11" rx="2.5" fill="#3a3a3a" stroke="#333"/><path d="M44.5 12 L48.5 16 L44.5 20" fill="none" stroke="#bdbdbd" stroke-width="1.2"/><path d="M56 10 H61.5 L63 11.5 H70 V22 H56 Z" fill="#bdbdbd"/><path d="M56 12.5 H70" stroke="#404040" stroke-width="0.8"/></svg>
<div class="t" style="left:1836.50px;top:817.49px;font-size:11px;color:#e2e2e2;transform:scaleX(0.9083);">100 % Normal</div>
<div class="t" style="left:1836.50px;top:829.19px;font-size:11px;color:#e2e2e2;transform:scaleX(0.9700);">Folder 5</div>
<div class="a" style="left:1773px;top:627px;width:1px;height:248px;background:#262626;"></div>
<div class="a" style="left:1791px;top:627px;width:1px;height:248px;background:#262626;"></div>
<div class="a" style="left:1754px;top:884px;width:152px;height:1px;background:#262626;"></div>
<div class="a" style="left:1773px;top:843px;width:1px;height:41px;background:#262626;"></div>
<div class="a" style="left:1791px;top:843px;width:1px;height:41px;background:#262626;"></div>
<svg style="left:1754px;top:843px;" width="152" height="41" viewBox="0 0 152 41"><path d="M2 21 Q9 13 16 21" fill="none" stroke="#bdbdbd" stroke-width="1.2"/><circle cx="9" cy="20.5" r="3.2" fill="#bdbdbd"/><rect x="24" y="14.5" width="11" height="11" rx="2.5" fill="#3a3a3a" stroke="#333"/></svg>
<div class="a" style="left:1798px;top:848px;width:26px;height:33px;background:#ffffff;border:1px solid #333"></div>
<div class="a" style="left:1837px;top:848px;width:17px;height:18px;background:#ffffff;border:1px solid #333"></div>
<svg style="left:1837px;top:848px;" width="17" height="18" viewBox="0 0 17 18"><path d="M5 4.5 H11.5 V13.5 H5 Z" fill="none" stroke="#333"/><path d="M5 10 L7.5 13.5 H5 Z" fill="#333"/></svg>
<div class="t" style="left:1833.60px;top:869.49px;font-size:11px;color:#e2e2e2;transform:scaleX(0.9335);">Paper</div>
<div class="a" style="left:1754px;top:1034px;width:164px;height:3px;background:#4a4a4a;"></div>
<svg style="left:1828px;top:1035px;" width="30" height="4" viewBox="0 0 30 4"><rect x="0.0" y="0" width="1" height="1" fill="#bbb"/><rect x="3.5" y="0" width="1" height="1" fill="#bbb"/><rect x="7.0" y="0" width="1" height="1" fill="#bbb"/><rect x="10.5" y="0" width="1" height="1" fill="#bbb"/><rect x="14.0" y="0" width="1" height="1" fill="#bbb"/></svg>
<svg style="left:264px;top:48px;" width="520" height="25" viewBox="0 0 520 25"><rect x="4.5" y="4.5" width="17" height="17" rx="2" fill="none" stroke="#bdbdbd" stroke-width="1.2"/><path d="M8.5 16 Q6.5 11 11.5 9 Q16.5 7 18 10.5 Q19 13.5 14 14.5 Q10.5 15 11 12 Q12 10.5 15 11" fill="none" stroke="#bdbdbd" stroke-width="1.2"/><path d="M29.5 4 V21" stroke="#6e6e6e"/><path d="M46 16.5 V5 H53.5 V13" fill="none" stroke="#bdbdbd" stroke-width="1.2"/><path d="M40 5.5 V19.5 Q40 21 42 21 H45" fill="none" stroke="#bdbdbd" stroke-width="1.2"/><rect x="39.5" y="4.5" width="13" height="16" rx="2" fill="none" stroke="#bdbdbd" stroke-width="1.2"/><path d="M40 17 L43 20.5 V17 Z" fill="#bdbdbd"/><circle cx="52" cy="20" r="5" fill="#bdbdbd"/><path d="M52 17 V23 M49 20 H55" stroke="#4a4a4a" stroke-width="1.2"/><path d="M61.5 20.5 V7.5 H66.5 L68 9.5 H72" fill="none" stroke="#bdbdbd" stroke-width="1.2"/><path d="M62 20.5 L65 12 H79 L76 20.5 Z" fill="#bdbdbd"/><path d="M71 10 Q73 6 78 6 M76 3.5 L79 6 L76 8.5" fill="none" stroke="#bdbdbd" stroke-width="1.2"/><path d="M85 15 L88 9 H91 M96 9 H99 L102 15 V20.5 H85 Z" fill="none" stroke="#7a7a7a" stroke-width="1.2"/><rect x="85" y="17" width="17" height="3.5" fill="#7a7a7a"/><path d="M93.5 4 V13 M90.5 10 L93.5 13 L96.5 10" fill="none" stroke="#7a7a7a" stroke-width="1.2"/><path d="M108 11.5 L111.5 15 L115 11.5" fill="none" stroke="#bdbdbd" stroke-width="1.2"/><path d="M123.5 4 V21" stroke="#6e6e6e"/><path d="M132 20.5 H141 Q146 20.5 146 15 Q146 10 141 10 H133" fill="none" stroke="#bdbdbd" stroke-width="1.3"/><path d="M131 10 L136 6 V14 Z" fill="#bdbdbd"/><path d="M169 20.5 H160 Q155 20.5 155 15 Q155 10 160 10 H168" fill="none" stroke="#7a7a7a" stroke-width="1.3"/><path d="M170 10 L165 6 V14 Z" fill="#7a7a7a"/><path d="M179.5 4 V21" stroke="#6e6e6e"/><path d="M199.50 12.50 L203.50 12.50" stroke="#bdbdbd" stroke-width="1.6" stroke-linecap="round"/><path d="M198.90 14.75 L202.36 16.75" stroke="#bdbdbd" stroke-width="1.6" stroke-linecap="round"/><path d="M197.25 16.40 L199.25 19.86" stroke="#bdbdbd" stroke-width="1.6" stroke-linecap="round"/><path d="M195.00 17.00 L195.00 21.00" stroke="#bdbdbd" stroke-width="1.6" stroke-linecap="round"/><path d="M192.75 16.40 L190.75 19.86" stroke="#bdbdbd" stroke-width="1.6" stroke-linecap="round"/><path d="M191.10 14.75 L187.64 16.75" stroke="#bdbdbd" stroke-width="1.6" stroke-linecap="round"/><path d="M190.50 12.50 L186.50 12.50" stroke="#bdbdbd" stroke-width="1.6" stroke-linecap="round"/><path d="M191.10 10.25 L187.64 8.25" stroke="#bdbdbd" stroke-width="1.6" stroke-linecap="round"/><path d="M192.75 8.60 L190.75 5.14" stroke="#bdbdbd" stroke-width="1.6" stroke-linecap="round"/><path d="M195.00 8.00 L195.00 4.00" stroke="#bdbdbd" stroke-width="1.6" stroke-linecap="round"/><path d="M197.25 8.60 L199.25 5.14" stroke="#bdbdbd" stroke-width="1.6" stroke-linecap="round"/><path d="M198.90 10.25 L202.36 8.25" stroke="#bdbdbd" stroke-width="1.6" stroke-linecap="round"/><rect x="212.5" y="5.5" width="11" height="11" fill="none" stroke="#7a7a7a" stroke-dasharray="1.5 1"/><path d="M220 19 L221 21 M224 18 L226 20 M226 14 L228 14" stroke="#7a7a7a"/><path d="M244 4 L253 13 L244 22 L235 13 Z" fill="#7a7a7a"/><path d="M236 14 Q232 18 236 20" fill="none" stroke="#7a7a7a" stroke-width="2"/><rect x="261.5" y="6.5" width="13" height="13" fill="none" stroke="#bdbdbd" stroke-width="1.2"/><g fill="#bdbdbd"><circle cx="268" cy="4" r="1.5"/><circle cx="268" cy="20" r="1.5"/><circle cx="261.5" cy="13" r="1.5"/><circle cx="274.5" cy="13" r="1.5"/><circle cx="261.5" cy="6.5" r="1.2"/><circle cx="274.5" cy="6.5" r="1.2"/><circle cx="261.5" cy="19.5" r="1.2"/><circle cx="274.5" cy="19.5" r="1.2"/></g><path d="M283.5 4 V21" stroke="#6e6e6e"/><rect x="291.5" y="5.5" width="15" height="14" fill="none" stroke="#7a7a7a" stroke-dasharray="2 1.2"/><path d="M291.5 5.5 L306.5 19.5" stroke="#7a7a7a"/><rect x="315.5" y="5.5" width="15" height="14" fill="none" stroke="#7a7a7a" stroke-dasharray="2 1.2"/><path d="M315.5 19.5 L330.5 5.5 V19.5 Z" fill="#7a7a7a"/><rect x="339.5" y="5.5" width="15" height="14" rx="1.5" fill="none" stroke="#7a7a7a"/><rect x="342.5" y="8.5" width="9" height="8" fill="none" stroke="#7a7a7a" stroke-dasharray="1.5 1"/><path d="M363.5 4 V21" stroke="#6e6e6e"/><path d="M371 5 V21 H388 Z" fill="none" stroke="#bdbdbd" stroke-width="1.3" stroke-linejoin="miter"/><path d="M376 15 L386 4" stroke="#bdbdbd" stroke-width="2.4"/><rect x="391" y="1" width="23" height="24" fill="#66718c"/><rect x="414" y="1" width="25" height="24" fill="#66718c"/><path d="M394 15 H410 Q410 22 402 22 Q394 22 394 15 Z" fill="none" stroke="#bdbdbd" stroke-width="1.2"/><path d="M401 15 L410 5" stroke="#bdbdbd" stroke-width="2.2"/><path d="M418 13.5 V22 M416 19.5 H436 M426 13.5 V22" stroke="#bdbdbd" stroke-width="1"/><path d="M418 19.5 H432" stroke="#bdbdbd" stroke-width="1.5"/><path d="M424 16 L434 5" stroke="#bdbdbd" stroke-width="2.2"/><path d="M444.5 4 V21" stroke="#6e6e6e"/><rect x="452.5" y="3.5" width="13" height="19" rx="2" fill="none" stroke="#bdbdbd" stroke-width="1.2"/><rect x="453" y="18" width="12" height="4" fill="#bdbdbd"/><g fill="#bdbdbd"><rect x="455.5" y="6" width="1.6" height="1.6"/><rect x="455.5" y="9" width="1.6" height="1.6"/><rect x="455.5" y="12" width="1.6" height="1.6"/><rect x="458.5" y="6" width="1.6" height="1.6"/><rect x="458.5" y="9" width="1.6" height="1.6"/><rect x="458.5" y="12" width="1.6" height="1.6"/><rect x="461.5" y="6" width="1.6" height="1.6"/></g><path d="M475.5 4 V21" stroke="#6e6e6e"/><path d="M487 20 A8 7.5 0 1 1 492 21.5 L485.5 23.5 Z" fill="none" stroke="#bdbdbd" stroke-width="1.2" stroke-linejoin="round"/><path d="M488.5 10.5 Q488.5 7.5 491.5 7.5 Q494.5 7.5 494.5 10 Q494.5 12 491.5 13.5 V15.5" fill="none" stroke="#bdbdbd" stroke-width="1.3"/><circle cx="491.5" cy="18" r="0.9" fill="#bdbdbd"/><path d="M497 8 L501.5 3.5 M498.5 3 H502 V6.5" fill="none" stroke="#bdbdbd" stroke-width="1.1"/></svg>
<div class="a" style="left:264px;top:73px;width:1447px;height:1px;background:#2e2e2e;"></div>
<div class="a" style="left:264px;top:74px;width:1447px;height:22px;background:linear-gradient(to right,#373737,#3a3a3a)"></div>
<div class="a" style="left:264px;top:75px;width:100px;height:20px;background:#66718c;"></div>
<div class="a" style="left:364px;top:75px;width:99px;height:20px;background:#4d4d4d;"></div>
<div class="t" style="left:268.00px;top:78.77px;font-size:11.5px;color:#e4e4e4;transform:scaleX(0.8831);">ame 1 year</div>
<div class="t" style="left:367.90px;top:78.77px;font-size:11.5px;color:#bdbdbd;transform:scaleX(0.9035);">amesherrif.png</div>
<svg style="left:264px;top:75px;" width="200" height="20" viewBox="0 0 200 20"><path d="M85.5 6.5 L92.5 13.5 M92.5 6.5 L85.5 13.5" stroke="#e0e0e0" stroke-width="1.1"/><path d="M185.5 6.5 L192.5 13.5 M192.5 6.5 L185.5 13.5" stroke="#d0d0d0" stroke-width="1.1"/></svg>
<svg style="left:1699px;top:78px;" width="12" height="12" viewBox="0 0 12 12"><path d="M2.5 4.5 L6 8 L9.5 4.5" fill="none" stroke="#bdbdbd" stroke-width="1.2"/></svg>
<div class="a" style="left:264px;top:96px;width:1435px;height:930px;background:#2d2d2d;"></div>
<div class="a" style="left:1699px;top:96px;width:12px;height:930px;background:#434343;"></div>
<div class="a" style="left:1699px;top:96px;width:12px;height:12px;background:#5a5a5a;border-radius:2px"></div>
<div class="a" style="left:1700px;top:376px;width:10px;height:371px;background:#5a5a5a;border-radius:5px"></div>
<div class="a" style="left:1699px;top:1014px;width:12px;height:12px;background:#5a5a5a;border-radius:2px"></div>
<svg style="left:1699px;top:96px;" width="12" height="930" viewBox="0 0 12 930"><path d="M3 7.5 L6 4.5 L9 7.5" fill="none" stroke="#bdbdbd" stroke-width="1.1"/><path d="M3 924 L6 927 L9 924" fill="none" stroke="#bdbdbd" stroke-width="1.1"/></svg>
<div class="a" style="left:264px;top:1026px;width:1447px;height:12px;background:#4a4a4a;"></div>
<div class="a" style="left:600px;top:1026px;width:1087px;height:12px;background:#454545;"></div>
<div class="a" style="left:884px;top:1027px;width:544px;height:10px;background:#5a5a5a;border-radius:5px"></div>
<div class="a" style="left:1687px;top:1026px;width:12px;height:12px;background:#5a5a5a;border-radius:2px"></div>
<div class="a" style="left:1699px;top:1026px;width:12px;height:12px;background:#4a4a4a;"></div>
<svg style="left:1687px;top:1026px;" width="12" height="12" viewBox="0 0 12 12"><path d="M4.5 3 L7.5 6 L4.5 9" fill="none" stroke="#bdbdbd" stroke-width="1.1"/></svg>
<svg style="left:266px;top:1026px" width="340" height="12"><rect x="0.5" y="0.5" width="97" height="11" fill="#343434" stroke="#6a6a6a"/><path d="M1 11 L97 1 V1 H1 Z" fill="#4a4a4a" opacity="0.8"/><rect x="44" y="1" width="3" height="11" fill="#6a6a6a"/><path d="M105 7.5 H113 M126 7.5 H134 M130 3.5 V11.5" stroke="#7a7a7a" stroke-width="1.3"/><rect x="146" y="3.5" width="6.5" height="6.5" fill="#bdbdbd"/><rect x="160.5" y="0.5" width="97" height="11" fill="#343434" stroke="#6a6a6a"/><path d="M161 1 L168 11 H161 Z M200 1 L257 11 H205 Z" fill="#4a4a4a"/><rect x="211" y="1" width="3" height="11" fill="#6a6a6a"/><path d="M272 10 A4.5 4.5 0 1 1 277 10" fill="none" stroke="#bdbdbd" stroke-width="1.1" transform="translate(0 -1)"/><path d="M268.5 7 L271 10.5 L274 7.5 Z" fill="#bdbdbd"/><path d="M291 10 A4.5 4.5 0 1 1 296 10" fill="none" stroke="#bdbdbd" stroke-width="1.1" transform="translate(0 -1)"/><path d="M299.5 7 L297 10.5 L294 7.5 Z" fill="#bdbdbd"/><circle cx="308.5" cy="6.5" r="4.8" fill="none" stroke="#bdbdbd" stroke-width="1.1"/><circle cx="308.5" cy="6.5" r="1.6" fill="#bdbdbd"/><rect x="319" y="0" width="12" height="12" rx="2" fill="#5a5a5a"/><path d="M327 3 L324 6 L327 9" fill="none" stroke="#bdbdbd" stroke-width="1.1"/></svg>
<div class="t" style="left:269.00px;top:1027.72px;font-size:12.5px;color:#e8e8e8;transform:scaleX(0.8222);">36.7</div>
<div class="t" style="left:431.00px;top:1027.72px;font-size:12.5px;color:#e8e8e8;transform:scaleX(0.8633);">0.0</div>
<div class="a" style="left:590px;top:123px;width:704px;height:867px;background:#ffffff;"></div>
<svg style="left:590px;top:123px;overflow:hidden" width="704" height="867" viewBox="0 0 704 867"><g fill="none" stroke="#111" stroke-linecap="round" stroke-linejoin="round"><g transform="translate(0 0) scale(0.26427)"><path d="M465 425 C470 330 540 262 700 248 C830 245 900 330 905 420 L940 485" stroke-width="0.9" vector-effect="non-scaling-stroke"/><path d="M905 420 C900 500 880 560 850 640 L820 700" stroke-width="0.9" vector-effect="non-scaling-stroke"/><path d="M465 425 C455 500 450 600 452 670" stroke-width="0.9" vector-effect="non-scaling-stroke"/><path d="M452 668 L520 600 L525 720 L580 690" stroke-width="0.9" vector-effect="non-scaling-stroke"/><path d="M520 590 C535 650 580 695 640 705 C690 700 720 660 735 620" stroke-width="0.9" vector-effect="non-scaling-stroke"/><path d="M560 400 C570 470 580 520 595 565" stroke-width="0.9" vector-effect="non-scaling-stroke"/><path d="M620 300 C630 400 640 480 660 560" stroke-width="0.9" vector-effect="non-scaling-stroke"/><path d="M690 330 C720 420 760 500 780 585" stroke-width="0.9" vector-effect="non-scaling-stroke"/><path d="M770 360 C780 450 760 520 745 580" stroke-width="0.9" vector-effect="non-scaling-stroke"/><path d="M840 360 C870 420 900 470 935 485" stroke-width="0.9" vector-effect="non-scaling-stroke"/><path d="M625 420 C660 410 720 415 745 430" stroke-width="0.9" vector-effect="non-scaling-stroke"/><path d="M515 470 C500 490 505 540 530 550 C560 555 570 520 560 490 C555 470 530 465 515 470" stroke-width="0.9" vector-effect="non-scaling-stroke"/><path d="M650 495 C640 510 640 550 665 560 C700 570 720 540 715 510 C710 490 680 488 650 495" stroke-width="0.9" vector-effect="non-scaling-stroke"/><path d="M625 610 Q640 600 650 615 Q665 600 680 612" stroke-width="0.9" vector-effect="non-scaling-stroke"/><path d="M590 640 C580 650 590 660 600 655" stroke-width="0.9" vector-effect="non-scaling-stroke"/><path d="M720 690 L700 740 L730 700 L760 760" stroke-width="0.9" vector-effect="non-scaling-stroke"/><path d="M0 91 L113 176" stroke-width="2" vector-effect="non-scaling-stroke"/><path d="M129 171 L235 256" stroke-width="2" vector-effect="non-scaling-stroke"/><path d="M129 171 C90 215 62 280 52 333" stroke-width="2" vector-effect="non-scaling-stroke"/><path d="M52 333 L235 382" stroke-width="2" vector-effect="non-scaling-stroke"/><path d="M0 277 L52 305" stroke-width="2" vector-effect="non-scaling-stroke"/><path d="M22 152 L45 134 L87 164 L75 193 L35 172 Z" stroke-width="2" vector-effect="non-scaling-stroke"/><path d="M0 240 L30 235 L22 272 L0 265" stroke-width="2" vector-effect="non-scaling-stroke"/><path d="M169 211 C127 253 110 305 113 350" stroke-width="2" vector-effect="non-scaling-stroke"/><path d="M134 303 L160 300 L220 328 L162 338 Z" stroke-width="2" vector-effect="non-scaling-stroke"/><path d="M252 175 L262 190 L240 225 L245 250 C230 330 230 400 245 425 L240 440 L265 445 C300 480 360 490 420 480 C500 460 545 380 545 300 C545 200 470 120 390 120 C330 120 290 140 252 175" stroke-width="2" vector-effect="non-scaling-stroke"/><path d="M239 260 L385 251 L432 296 L366 319 L436 361 L404 441 L357 439" stroke-width="2" vector-effect="non-scaling-stroke"/><path d="M293 429 L310 267 L361 439 M293 429 L324 404 L357 439" stroke-width="2" vector-effect="non-scaling-stroke"/><path d="M357 291 L390 284 M375 394 L408 387" stroke-width="2" vector-effect="non-scaling-stroke"/><path d="M380 164 C328 169 263 202 239 256" stroke-width="2" vector-effect="non-scaling-stroke"/><path d="M495 455 L545 470" stroke-width="2" vector-effect="non-scaling-stroke"/><path d="M630 492 C670 475 720 472 755 478" stroke-width="2" vector-effect="non-scaling-stroke"/><path d="M697 432 L700 500" stroke-width="2" vector-effect="non-scaling-stroke"/></g><g transform="translate(352 0) scale(0.26427)"><path d="M615 135 C580 110 530 130 522 180 C520 215 540 235 560 235" stroke-width="0.9" vector-effect="non-scaling-stroke"/><path d="M815 145 C840 110 900 110 920 160 C935 210 900 240 860 230" stroke-width="0.9" vector-effect="non-scaling-stroke"/><path d="M540 245 C570 170 640 125 720 122 C800 120 870 160 900 245 C915 300 920 370 925 420" stroke-width="0.9" vector-effect="non-scaling-stroke"/><path d="M540 245 C520 300 520 360 545 420 L560 480 L605 530" stroke-width="0.9" vector-effect="non-scaling-stroke"/><path d="M925 420 L895 400 L880 470 L860 500 L845 510" stroke-width="0.9" vector-effect="non-scaling-stroke"/><path d="M600 470 C620 500 660 520 700 528 C740 528 770 510 790 490" stroke-width="0.9" vector-effect="non-scaling-stroke"/><path d="M600 250 C605 320 615 370 625 400" stroke-width="0.9" vector-effect="non-scaling-stroke"/><path d="M650 240 C660 300 650 360 640 380" stroke-width="0.9" vector-effect="non-scaling-stroke"/><path d="M700 240 C730 300 760 360 770 410" stroke-width="0.9" vector-effect="non-scaling-stroke"/><path d="M740 245 C790 300 810 370 810 430" stroke-width="0.9" vector-effect="non-scaling-stroke"/><path d="M690 300 C720 280 760 290 790 330" stroke-width="0.9" vector-effect="non-scaling-stroke"/><path d="M585 410 C570 380 600 360 630 375 C660 390 660 430 640 440 C610 450 590 435 585 410" stroke-width="0.9" vector-effect="non-scaling-stroke"/><path d="M650 470 C680 485 720 485 755 462" stroke-width="0.9" vector-effect="non-scaling-stroke"/><path d="M740 400 L760 410 L750 420 L775 405" stroke-width="0.9" vector-effect="non-scaling-stroke"/><path d="M530 350 L600 330 M535 365 L600 345" stroke-width="0.9" vector-effect="non-scaling-stroke"/><path d="M530 245 L390 312 C365 330 365 360 375 375 L420 440 C460 520 510 570 548 600" stroke-width="0.9" vector-effect="non-scaling-stroke"/><path d="M445 380 C470 370 505 370 530 400" stroke-width="0.9" vector-effect="non-scaling-stroke"/><path d="M548 600 C580 570 620 545 680 540 C750 545 800 550 840 570 C890 600 910 640 905 690 C900 720 880 750 870 760" stroke-width="0.9" vector-effect="non-scaling-stroke"/><path d="M548 600 C500 640 480 690 485 730 C500 780 560 790 620 790 C700 800 750 830 775 850 C820 820 840 760 838 700 C835 650 820 610 810 580" stroke-width="0.9" vector-effect="non-scaling-stroke"/><path d="M560 615 C600 600 650 610 700 650" stroke-width="0.9" vector-effect="non-scaling-stroke"/><path d="M620 560 C660 600 680 640 700 660" stroke-width="0.9" vector-effect="non-scaling-stroke"/><path d="M565 720 C640 710 700 730 760 760" stroke-width="0.9" vector-effect="non-scaling-stroke"/><path d="M0 640 L50 620 L65 680 L20 700 L0 690 M10 660 L50 650" stroke-width="0.9" vector-effect="non-scaling-stroke"/><path d="M705 385 C730 360 760 350 785 345" stroke-width="2" vector-effect="non-scaling-stroke"/><path d="M575 395 L595 385" stroke-width="2" vector-effect="non-scaling-stroke"/></g><g transform="translate(0 277) scale(0.26427)"><path d="M560 200 C560 500 540 800 530 1048" stroke-width="0.9" vector-effect="non-scaling-stroke"/><path d="M325 620 L335 785" stroke-width="0.9" vector-effect="non-scaling-stroke"/></g><g transform="translate(352 277) scale(0.26427)"></g><g transform="translate(0 554) scale(0.29860)"><path d="M725 120 C800 120 850 160 860 200 C870 300 850 420 860 560 C870 640 860 700 820 720" stroke-width="0.9" vector-effect="non-scaling-stroke"/><path d="M290 225 C280 300 290 360 330 410 L385 400" stroke-width="0.9" vector-effect="non-scaling-stroke"/><path d="M330 250 L360 300 M300 320 L380 320" stroke-width="0.9" vector-effect="non-scaling-stroke"/><path d="M385 300 C380 240 420 210 500 220 C560 225 700 280 750 380 C740 450 700 500 640 510 C560 510 440 480 400 420 C380 380 385 330 385 300" stroke-width="0.9" vector-effect="non-scaling-stroke"/><path d="M480 240 L520 300 L560 280 C620 280 680 290 730 310" stroke-width="0.9" vector-effect="non-scaling-stroke"/><path d="M440 490 Q470 480 500 495 Q540 490 580 505 Q620 500 660 505 Q700 495 740 480" stroke-width="0.9" vector-effect="non-scaling-stroke"/><path d="M450 520 Q480 540 510 530 Q560 545 600 535 Q650 545 710 540" stroke-width="0.9" vector-effect="non-scaling-stroke"/><path d="M460 540 C460 600 455 640 440 700 C410 760 370 860 350 1048" stroke-width="0.9" vector-effect="non-scaling-stroke"/><path d="M720 545 C720 620 730 680 760 760 C790 840 820 920 840 1048" stroke-width="0.9" vector-effect="non-scaling-stroke"/><path d="M400 700 C380 800 380 900 385 1000" stroke-width="0.9" vector-effect="non-scaling-stroke"/><path d="M470 850 C550 880 650 870 722 830" stroke-width="0.9" vector-effect="non-scaling-stroke"/><path d="M470 950 C560 925 640 905 682 900" stroke-width="0.9" vector-effect="non-scaling-stroke"/><path d="M385 1000 Q420 1020 460 1005 Q500 1025 540 1005 Q580 1025 620 1005 Q660 1025 700 1005 Q740 1025 780 1005 Q810 1020 840 1005" stroke-width="0.9" vector-effect="non-scaling-stroke"/><path d="M520 720 C570 690 620 640 650 580" stroke-width="0.9" vector-effect="non-scaling-stroke"/><path d="M620 720 C660 700 690 680 700 670" stroke-width="0.9" vector-effect="non-scaling-stroke"/><path d="M560 780 C560 900 570 980 580 1048" stroke-width="0.9" vector-effect="non-scaling-stroke"/><path d="M760 560 C790 620 800 700 790 760" stroke-width="0.9" vector-effect="non-scaling-stroke"/><path d="M800 720 L860 740 L840 810 L800 760 Z" stroke-width="0.9" vector-effect="non-scaling-stroke"/><path d="M830 820 C870 900 900 980 920 1048" stroke-width="0.9" vector-effect="non-scaling-stroke"/><path d="M1130 0 C1140 40 1150 80 1160 110 L1179 100" stroke-width="0.9" vector-effect="non-scaling-stroke"/><path d="M860 230 C870 280 870 330 860 380" stroke-width="0.9" vector-effect="non-scaling-stroke"/><path d="M520 350 L580 380 M460 300 L500 440 M540 280 L560 440 M600 300 L610 460 M650 320 L650 480 M700 330 L690 470" stroke-width="0.9" vector-effect="non-scaling-stroke"/></g><g transform="translate(352 554) scale(0.29860)"><path d="M100 0 C105 40 120 80 170 115 C210 115 240 100 245 40 L225 0" stroke-width="0.9" vector-effect="non-scaling-stroke"/><path d="M0 60 L70 30 M60 0 L75 40" stroke-width="0.9" vector-effect="non-scaling-stroke"/><path d="M400 260 L420 295 L510 330 L520 300" stroke-width="0.9" vector-effect="non-scaling-stroke"/><path d="M620 330 L860 320 L860 400 L630 400 Z" stroke-width="0.9" vector-effect="non-scaling-stroke"/><path d="M625 350 L860 345 M625 370 L860 365 M628 390 L860 385" stroke-width="0.9" vector-effect="non-scaling-stroke"/><path d="M610 400 C570 480 520 600 460 700 L410 760 C430 790 480 810 560 830 C640 840 700 830 760 805 L820 760 C850 680 870 560 865 450 L850 400" stroke-width="0.9" vector-effect="non-scaling-stroke"/><path d="M785 330 L665 830 M770 330 L650 830" stroke-width="0.9" vector-effect="non-scaling-stroke"/><path d="M560 560 C530 640 520 700 520 750" stroke-width="0.9" vector-effect="non-scaling-stroke"/><path d="M650 520 C630 620 620 700 620 760" stroke-width="0.9" vector-effect="non-scaling-stroke"/><path d="M810 440 C810 560 800 680 800 750" stroke-width="0.9" vector-effect="non-scaling-stroke"/><path d="M390 290 C360 380 330 480 290 560 C260 640 220 700 175 760 C180 800 210 825 260 810 C280 780 290 730 310 700 C350 620 420 500 485 330" stroke-width="0.9" vector-effect="non-scaling-stroke"/><path d="M450 800 C430 880 420 960 410 1048" stroke-width="0.9" vector-effect="non-scaling-stroke"/><path d="M660 830 C640 870 620 920 590 960 L570 1048" stroke-width="0.9" vector-effect="non-scaling-stroke"/><path d="M820 760 C800 820 760 880 680 930 C650 950 630 970 620 990" stroke-width="0.9" vector-effect="non-scaling-stroke"/><path d="M590 930 C600 960 620 980 640 990 M610 900 L650 920" stroke-width="0.9" vector-effect="non-scaling-stroke"/><path d="M450 800 L500 810 M650 830 L665 840" stroke-width="2" vector-effect="non-scaling-stroke"/></g><g transform="translate(80 177) scale(0.24814)"><path d="M35 125 C60 110 100 100 130 100 C170 95 210 100 240 120 L270 130 C250 170 220 200 180 210 L130 215 C90 210 60 190 35 140 Z" stroke-width="0.9" vector-effect="non-scaling-stroke"/><path d="M60 140 L130 150 M70 165 L130 175 M100 100 L120 130 M140 130 C170 120 200 120 230 130" stroke-width="0.9" vector-effect="non-scaling-stroke"/><path d="M200 200 L300 150 M210 215 L315 165 M225 230 L330 180 M240 248 L340 195" stroke-width="0.9" vector-effect="non-scaling-stroke"/><path d="M190 0 L250 60 L270 10 L300 60 L330 0 M420 0 L440 80 L470 20 L490 70 L520 0 L550 50" stroke-width="0.9" vector-effect="non-scaling-stroke"/><path d="M330 90 C300 120 290 150 280 200" stroke-width="0.9" vector-effect="non-scaling-stroke"/><path d="M410 100 C460 100 520 110 540 170 C545 250 530 350 500 420" stroke-width="0.9" vector-effect="non-scaling-stroke"/><path d="M240 250 C200 270 175 300 170 330 C168 380 180 420 210 430 L170 460 L175 570 L240 560" stroke-width="0.9" vector-effect="non-scaling-stroke"/><path d="M200 440 C260 430 350 420 400 430 L480 420 M470 200 L480 250" stroke-width="0.9" vector-effect="non-scaling-stroke"/><path d="M240 120 C330 200 420 300 480 380 C540 470 600 560 650 640" stroke-width="0.9" vector-effect="non-scaling-stroke"/><path d="M330 210 C420 330 500 450 560 560 C620 680 700 830 760 1048" stroke-width="0.9" vector-effect="non-scaling-stroke"/><path d="M280 600 L290 1048 M380 560 L400 1048 M440 600 L460 1000 M520 600 L570 1048 M340 660 L420 560" stroke-width="0.9" vector-effect="non-scaling-stroke"/><path d="M480 280 C520 240 580 240 620 250 C650 220 700 200 740 205 C830 220 920 300 1000 400 L1065 485" stroke-width="0.9" vector-effect="non-scaling-stroke"/><path d="M520 300 C500 350 480 420 490 500 C500 560 540 620 600 680" stroke-width="0.9" vector-effect="non-scaling-stroke"/><path d="M640 430 C680 480 720 520 700 600 M740 380 C760 440 800 480 820 460 M770 370 C800 420 850 470 900 460" stroke-width="0.9" vector-effect="non-scaling-stroke"/><path d="M640 480 C700 495 760 500 800 490 M930 430 C960 500 1000 560 1020 600 L1000 660" stroke-width="0.9" vector-effect="non-scaling-stroke"/><path d="M680 620 C700 700 760 750 830 760 C900 750 950 720 990 660" stroke-width="0.9" vector-effect="non-scaling-stroke"/><path d="M950 480 C990 520 1020 580 1020 680" stroke-width="0.9" vector-effect="non-scaling-stroke"/><path d="M780 670 C800 700 850 720 880 710 C910 690 920 660 915 630 C870 640 820 650 780 670 Z" stroke-width="0.9" vector-effect="non-scaling-stroke"/><path d="M740 660 L760 650 L780 662 L800 645 M900 560 L920 590 L940 578 L950 600" stroke-width="0.9" vector-effect="non-scaling-stroke"/><path d="M905 210 C930 170 950 130 1000 115 C1040 105 1080 100 1100 110 C1110 180 1100 250 1090 330 C1100 400 1115 460 1100 560 L1050 700" stroke-width="0.9" vector-effect="non-scaling-stroke"/><path d="M905 210 C910 300 925 400 940 500 L930 600" stroke-width="0.9" vector-effect="non-scaling-stroke"/><path d="M950 90 L1070 100 M945 110 L1075 118 M945 130 L1080 138 M945 150 L1080 158" stroke-width="0.9" vector-effect="non-scaling-stroke"/><path d="M980 0 C990 40 1020 70 1060 80 C1110 80 1160 40 1165 0" stroke-width="0.9" vector-effect="non-scaling-stroke"/><path d="M470 270 C450 330 470 450 540 560 C620 680 700 760 800 820 C900 870 980 860 1050 820" stroke-width="0.9" vector-effect="non-scaling-stroke"/><path d="M380 700 C480 800 620 860 760 880" stroke-width="0.9" vector-effect="non-scaling-stroke"/><path d="M430 640 C560 780 720 900 900 960 C1000 990 1100 1010 1200 1048" stroke-width="0.9" vector-effect="non-scaling-stroke"/><path d="M950 700 C1050 700 1150 740 1200 800 C1230 860 1220 940 1180 1000" stroke-width="0.9" vector-effect="non-scaling-stroke"/><path d="M960 740 L1010 770 L1070 775 L1020 745 M1100 820 C1130 900 1120 980 1100 1048" stroke-width="0.9" vector-effect="non-scaling-stroke"/><path d="M800 830 C830 900 880 950 900 1000" stroke-width="0.9" vector-effect="non-scaling-stroke"/><path d="M680 630 C700 590 750 565 800 565" stroke-width="2" vector-effect="non-scaling-stroke"/><path d="M845 530 C860 500 890 480 920 480" stroke-width="2" vector-effect="non-scaling-stroke"/><path d="M345 40 L380 30 L352 78" stroke-width="2" vector-effect="non-scaling-stroke"/><circle cx="865" cy="360" r="45" fill="#f4ecd0" stroke="#c39a45" stroke-width="12"/><circle cx="820" cy="350" r="14" fill="#c39a45"/><circle cx="910" cy="350" r="14" fill="#c39a45"/><circle cx="905" cy="380" r="12" fill="#c39a45"/><path d="M835 320 L855 280 L870 320" fill="none" stroke="#c39a45" stroke-width="8"/></g><g transform="translate(440 407) scale(0.22899)"><path d="M250 130 C320 60 420 10 520 5 C620 5 700 70 720 180 C730 260 725 350 700 440" stroke-width="0.9" vector-effect="non-scaling-stroke"/><path d="M250 130 C180 200 130 300 120 400 C125 480 160 580 200 650" stroke-width="0.9" vector-effect="non-scaling-stroke"/><path d="M400 160 C380 250 390 330 430 400 M440 140 C450 260 480 350 520 410 M520 140 C530 200 560 260 560 300" stroke-width="0.9" vector-effect="non-scaling-stroke"/><path d="M560 180 C600 260 650 320 670 380 M330 230 C360 240 400 250 420 255" stroke-width="0.9" vector-effect="non-scaling-stroke"/><path d="M450 70 C480 80 520 90 560 80 M470 100 C500 110 540 110 580 100" stroke-width="0.9" vector-effect="non-scaling-stroke"/><path d="M650 380 C660 450 660 520 640 560 C620 600 590 620 560 640 M700 440 C700 500 690 560 660 620 L640 650" stroke-width="0.9" vector-effect="non-scaling-stroke"/><path d="M150 400 C180 480 210 560 240 650 M230 480 C230 560 250 620 280 660 M180 560 L200 660" stroke-width="0.9" vector-effect="non-scaling-stroke"/><path d="M280 420 C290 500 320 560 380 600 C420 630 460 640 480 630 C520 620 570 590 600 560" stroke-width="0.9" vector-effect="non-scaling-stroke"/><path d="M490 460 C500 480 500 490 490 500 M410 545 C450 560 490 560 520 545" stroke-width="0.9" vector-effect="non-scaling-stroke"/><path d="M300 490 L320 480 L340 495 L360 485 M550 505 L570 495 L590 510 L605 500" stroke-width="0.9" vector-effect="non-scaling-stroke"/><path d="M300 360 C290 400 300 440 340 450 C380 455 400 420 390 380 C380 350 330 340 300 360" stroke-width="0.9" vector-effect="non-scaling-stroke"/><path d="M540 390 C535 420 550 460 580 460 C620 460 630 420 620 390 C600 370 560 370 540 390" stroke-width="0.9" vector-effect="non-scaling-stroke"/><path d="M560 250 L650 210 M570 270 L660 230 M580 290 L670 250" stroke-width="0.9" vector-effect="non-scaling-stroke"/><path d="M330 600 C350 700 370 800 390 1048 M350 600 C370 700 390 800 410 1048" stroke-width="0.9" vector-effect="non-scaling-stroke"/><path d="M480 640 C520 680 580 720 640 760" stroke-width="0.9" vector-effect="non-scaling-stroke"/><path d="M470 800 C460 860 480 930 500 940 C520 900 520 840 500 800 Z" stroke-width="0.9" vector-effect="non-scaling-stroke"/><path d="M510 780 C570 760 650 770 660 800 C620 820 560 820 510 800" stroke-width="0.9" vector-effect="non-scaling-stroke"/><path d="M520 830 L580 1000 L620 990 L560 820 M560 800 L720 880 L700 890" stroke-width="0.9" vector-effect="non-scaling-stroke"/><path d="M200 760 C220 700 280 660 330 650 M640 660 C700 680 760 760 780 850 C790 900 780 940 770 960" stroke-width="0.9" vector-effect="non-scaling-stroke"/><path d="M400 1000 C550 1000 700 980 770 940" stroke-width="0.9" vector-effect="non-scaling-stroke"/><path d="M360 700 C420 690 470 700 510 740 M380 740 C440 740 500 760 540 790" stroke-width="0.9" vector-effect="non-scaling-stroke"/><path d="M180 800 Q220 820 260 830 Q300 820 340 840 Q380 830 420 850" stroke-width="0.9" vector-effect="non-scaling-stroke"/><path d="M150 860 Q200 880 240 870 Q280 890 320 880 Q360 900 400 890" stroke-width="0.9" vector-effect="non-scaling-stroke"/><path d="M140 900 L180 960 L260 940 L340 980 M130 990 Q160 1010 190 1000 Q220 1020 250 1010" stroke-width="0.9" vector-effect="non-scaling-stroke"/><path d="M520 740 Q560 730 600 740 Q640 720 680 740 L700 760 M600 660 L640 680 L690 720" stroke-width="0.9" vector-effect="non-scaling-stroke"/><path d="M740 700 L760 660 L950 500 L980 510 L990 540 L800 700 L790 740 L760 740 Z" stroke-width="0.9" vector-effect="non-scaling-stroke"/><path d="M800 650 L960 520 M830 680 L880 740 L920 720" stroke-width="0.9" vector-effect="non-scaling-stroke"/><path d="M880 720 C930 690 980 690 970 720 C950 740 910 740 880 730" stroke-width="0.9" vector-effect="non-scaling-stroke"/><path d="M780 790 C800 760 830 760 850 780 L870 750 C900 740 940 760 950 790 C955 820 930 840 900 840 L850 860 C820 880 800 900 790 950" stroke-width="0.9" vector-effect="non-scaling-stroke"/><path d="M870 770 L930 770 M875 800 L935 800 M880 825 L930 830" stroke-width="0.9" vector-effect="non-scaling-stroke"/><path d="M790 950 C810 1000 820 1030 820 1048 M770 850 C760 900 760 980 750 1048" stroke-width="0.9" vector-effect="non-scaling-stroke"/><path d="M0 130 C60 90 120 60 200 30 M20 330 C80 280 140 240 220 200" stroke-width="0.9" vector-effect="non-scaling-stroke"/><path d="M40 100 C60 200 60 300 20 400 M100 80 L180 250 M180 0 L300 180" stroke-width="0.9" vector-effect="non-scaling-stroke"/><path d="M0 540 L120 420 L200 380" stroke-width="0.9" vector-effect="non-scaling-stroke"/><path d="M255 330 C300 310 360 320 410 350" stroke-width="2" vector-effect="non-scaling-stroke"/><path d="M280 340 L290 405" stroke-width="2" vector-effect="non-scaling-stroke"/><path d="M530 355 C580 340 630 350 665 370" stroke-width="2" vector-effect="non-scaling-stroke"/><path d="M630 362 L640 412" stroke-width="2" vector-effect="non-scaling-stroke"/><path d="M320 570 L350 590" stroke-width="2" vector-effect="non-scaling-stroke"/><circle cx="655" cy="300" r="28" fill="#f4ecd0" stroke="#c39a45" stroke-width="10"/><circle cx="630" cy="280" r="9" fill="#c39a45"/><circle cx="680" cy="325" r="9" fill="#c39a45"/><path d="M670 275 L690 260 L685 290" fill="#c39a45"/></g><g transform="translate(90 432) scale(0.20991)"><path d="M670 90 C700 40 780 15 850 30 C930 60 980 140 965 220 C955 260 930 290 900 300" stroke-width="0.9" vector-effect="non-scaling-stroke"/><path d="M760 60 C820 90 880 150 920 230 M730 70 C800 110 860 180 890 260" stroke-width="0.9" vector-effect="non-scaling-stroke"/><path d="M180 350 C210 230 300 140 420 100 C520 70 640 90 720 130 C820 180 880 280 890 380 C895 480 860 560 800 620 C760 660 720 690 680 700" stroke-width="0.9" vector-effect="non-scaling-stroke"/><path d="M340 200 C380 170 420 150 460 140 L490 130 L520 150 L560 180 L575 240 C500 220 420 205 340 200 Z" stroke-width="0.9" vector-effect="non-scaling-stroke"/><path d="M350 270 C380 350 410 430 440 480 L445 440 C430 370 440 300 460 290" stroke-width="0.9" vector-effect="non-scaling-stroke"/><path d="M480 270 C560 280 640 310 680 360 M520 300 C580 380 620 460 640 520 C680 580 690 650 670 720" stroke-width="0.9" vector-effect="non-scaling-stroke"/><path d="M560 460 C600 520 620 560 640 620 M700 200 C760 300 790 400 780 520" stroke-width="0.9" vector-effect="non-scaling-stroke"/><path d="M285 390 C280 440 290 480 330 490 C360 490 370 450 360 410 C350 380 310 370 285 390" stroke-width="0.9" vector-effect="non-scaling-stroke"/><path d="M495 420 C485 470 500 530 540 545 C580 550 595 510 590 470 C585 430 540 410 495 420" stroke-width="0.9" vector-effect="non-scaling-stroke"/><path d="M240 470 C260 560 300 640 350 690 C390 720 440 730 480 725 C540 715 590 690 620 660" stroke-width="0.9" vector-effect="non-scaling-stroke"/><path d="M380 620 C420 640 480 640 515 630 C490 660 460 670 440 665 C420 655 400 640 380 620" stroke-width="0.9" vector-effect="non-scaling-stroke"/><path d="M300 520 L320 510 L340 530 M510 590 L530 580 L550 595 L570 585" stroke-width="0.9" vector-effect="non-scaling-stroke"/><path d="M130 700 C140 600 180 520 240 460 L260 470 L250 690 L330 690 M240 470 L230 600 L260 690" stroke-width="0.9" vector-effect="non-scaling-stroke"/><path d="M180 500 C150 550 130 620 130 700" stroke-width="0.9" vector-effect="non-scaling-stroke"/><path d="M380 740 Q400 760 430 750 Q460 765 490 752 Q520 768 550 755 Q580 768 610 750" stroke-width="0.9" vector-effect="non-scaling-stroke"/><path d="M640 560 C670 620 690 690 660 760 L600 800" stroke-width="0.9" vector-effect="non-scaling-stroke"/><path d="M610 760 C700 760 770 790 790 840 C800 900 790 960 800 1048" stroke-width="0.9" vector-effect="non-scaling-stroke"/><path d="M100 800 L150 780 L240 810 L220 870 L120 850 Z M40 850 C20 900 10 960 0 1048 M120 880 C180 900 250 920 300 900" stroke-width="0.9" vector-effect="non-scaling-stroke"/><path d="M180 1048 C200 960 260 900 340 880 C420 870 520 890 600 950 M290 950 C350 940 420 960 480 990" stroke-width="0.9" vector-effect="non-scaling-stroke"/><path d="M350 840 L355 870 M415 840 L415 875 M490 845 L495 880 M550 840 L555 860 M590 820 L600 830" stroke-width="0.9" vector-effect="non-scaling-stroke"/><path d="M250 0 L270 300 M350 0 L420 250 M420 0 L430 90 M500 0 L540 120 M660 0 L670 100" stroke-width="0.9" vector-effect="non-scaling-stroke"/><path d="M0 100 Q100 110 240 90 M560 0 C600 200 640 400 660 560 M400 300 L420 1048 M600 850 L620 1048" stroke-width="0.9" vector-effect="non-scaling-stroke"/><path d="M245 355 C290 345 330 360 360 400" stroke-width="2" vector-effect="non-scaling-stroke"/><path d="M265 370 L270 430" stroke-width="2" vector-effect="non-scaling-stroke"/><path d="M460 415 C520 400 590 410 640 450" stroke-width="2" vector-effect="non-scaling-stroke"/><path d="M610 440 L620 490" stroke-width="2" vector-effect="non-scaling-stroke"/><path d="M455 290 L460 330" stroke-width="2" vector-effect="non-scaling-stroke"/><path d="M560 690 L610 670" stroke-width="2" vector-effect="non-scaling-stroke"/><path d="M390 780 C440 800 520 805 600 775" stroke-width="2" vector-effect="non-scaling-stroke"/></g><g transform="translate(310 197) scale(0.38153)"><path d="M0 420 L60 415 C120 430 170 460 185 500 C195 540 180 590 150 610 C110 625 60 630 0 625" stroke-width="0.9" vector-effect="non-scaling-stroke"/><path d="M60 440 C100 460 140 500 160 560 M20 460 C60 500 80 540 100 600 M100 440 C130 480 150 520 160 580" stroke-width="0.9" vector-effect="non-scaling-stroke"/><path d="M40 640 C30 720 30 800 60 900 C80 960 95 1000 100 1040" stroke-width="0.9" vector-effect="non-scaling-stroke"/><path d="M180 560 C210 620 240 660 290 680 C330 660 400 600 460 560 C520 520 570 500 630 480" stroke-width="0.9" vector-effect="non-scaling-stroke"/><path d="M110 700 C130 680 160 675 190 690 C220 720 240 780 250 830 C270 890 300 950 295 1000 C290 1020 250 1030 220 1025 C180 1010 140 960 120 920 C110 880 108 800 110 700 Z" stroke-width="0.9" vector-effect="non-scaling-stroke"/><path d="M140 880 L250 835 M150 940 L270 890" stroke-width="0.9" vector-effect="non-scaling-stroke"/><path d="M160 860 C220 870 290 880 330 870 C360 850 380 820 390 790" stroke-width="0.9" vector-effect="non-scaling-stroke"/><path d="M350 720 L440 640 M380 780 C400 720 420 680 460 640" stroke-width="0.9" vector-effect="non-scaling-stroke"/><path d="M450 550 L520 660 M480 545 L555 650" stroke-width="0.9" vector-effect="non-scaling-stroke"/><path d="M300 860 L345 870" stroke-width="2" vector-effect="non-scaling-stroke"/></g><g transform="translate(25 327) scale(0.12404)"><path d="M620 360 L700 380 L660 540 L640 700 M850 540 C900 580 980 620 1048 640 M880 470 L1020 520 M1000 20 L1010 560 L1048 600" stroke-width="0.9" vector-effect="non-scaling-stroke"/><path d="M480 910 L520 1048 M490 920 C600 910 700 930 800 940 L900 930 L920 1048" stroke-width="0.9" vector-effect="non-scaling-stroke"/><path d="M640 700 L650 920 M700 700 L720 930 M820 690 L860 970 M790 700 L820 960" stroke-width="0.9" vector-effect="non-scaling-stroke"/><path d="M830 0 L620 340 M920 0 L700 280" stroke-width="0.9" vector-effect="non-scaling-stroke"/><path d="M60 600 C50 700 100 790 190 830 C240 910 330 965 440 965 C580 960 710 870 790 720" stroke-width="2" vector-effect="non-scaling-stroke"/><path d="M60 600 C80 470 170 360 260 300 C300 280 360 280 385 300" stroke-width="2" vector-effect="non-scaling-stroke"/><path d="M300 330 C360 320 450 370 560 480 C640 570 700 650 750 720" stroke-width="2" vector-effect="non-scaling-stroke"/><path d="M300 330 C250 390 220 470 230 520 L250 600" stroke-width="2" vector-effect="non-scaling-stroke"/><path d="M245 600 C300 590 380 580 420 590 L380 690 C430 670 500 680 540 690 L640 580" stroke-width="2" vector-effect="non-scaling-stroke"/><path d="M290 510 L330 470 M420 450 C450 460 470 480 480 500 M450 640 L490 600" stroke-width="2" vector-effect="non-scaling-stroke"/><path d="M570 210 C620 150 660 100 700 100 C760 110 860 250 905 340 C910 380 880 410 820 420" stroke-width="2" vector-effect="non-scaling-stroke"/><path d="M570 210 C650 260 740 330 820 420" stroke-width="2" vector-effect="non-scaling-stroke"/><path d="M420 350 L510 215 M450 360 L540 225 M510 180 C520 160 560 150 580 165 L560 220" stroke-width="2" vector-effect="non-scaling-stroke"/><path d="M750 140 L790 95 M770 150 L800 110 M770 70 L830 90 L800 110 L770 70 Z" stroke-width="2" vector-effect="non-scaling-stroke"/><path d="M880 270 L930 240 M890 290 L940 260 M910 190 L960 230 L930 260 Z" stroke-width="2" vector-effect="non-scaling-stroke"/><path d="M640 530 L840 440 M660 580 L860 480 M830 430 C870 430 880 480 850 500" stroke-width="2" vector-effect="non-scaling-stroke"/><path d="M520 400 L560 340 L600 320 L580 380 Z" stroke-width="2" vector-effect="non-scaling-stroke"/></g><g transform="translate(374 177) scale(0.21368)"><path d="M100 320 C100 250 120 180 160 140 L215 115 L280 140 C360 190 450 250 520 340 C560 360 580 380 610 420 C650 470 690 510 720 560" stroke-width="0.9" vector-effect="non-scaling-stroke"/><path d="M100 320 C130 360 160 400 175 440 C200 520 240 600 290 680" stroke-width="0.9" vector-effect="non-scaling-stroke"/><path d="M135 170 C150 300 180 420 230 520 C250 570 270 620 300 650 M155 180 C170 300 200 420 250 510" stroke-width="0.9" vector-effect="non-scaling-stroke"/><path d="M270 230 C330 320 380 430 410 540 L430 600" stroke-width="0.9" vector-effect="non-scaling-stroke"/><path d="M290 680 L340 700 L380 690 L430 660 L435 600" stroke-width="0.9" vector-effect="non-scaling-stroke"/><path d="M370 740 L400 750 M375 770 L405 780 M380 800 L410 810 M385 830 L415 840 M390 860 L418 870 M340 730 C350 760 360 800 360 840" stroke-width="0.9" vector-effect="non-scaling-stroke"/><path d="M330 960 C320 1000 330 1030 350 1048 M420 920 C460 930 500 950 520 1000 L510 1048" stroke-width="0.9" vector-effect="non-scaling-stroke"/><path d="M440 690 C470 760 500 820 520 880 L540 1048" stroke-width="0.9" vector-effect="non-scaling-stroke"/><path d="M445 700 C490 760 560 820 640 825 C750 830 850 760 890 690" stroke-width="0.9" vector-effect="non-scaling-stroke"/><path d="M610 830 C610 900 620 960 640 1000 C660 1030 720 1040 750 1020 C770 980 770 900 760 830" stroke-width="0.9" vector-effect="non-scaling-stroke"/><path d="M550 130 C540 200 545 280 550 340 C560 360 580 380 600 400" stroke-width="0.9" vector-effect="non-scaling-stroke"/><path d="M550 290 C600 310 700 330 810 330" stroke-width="0.9" vector-effect="non-scaling-stroke"/><path d="M490 0 C490 60 520 110 560 130 C620 150 700 150 760 130" stroke-width="0.9" vector-effect="non-scaling-stroke"/><path d="M720 180 C760 200 800 215 840 215 C900 200 940 140 935 60 L930 0" stroke-width="0.9" vector-effect="non-scaling-stroke"/><path d="M840 215 C820 260 815 330 830 380 C840 450 880 520 900 580" stroke-width="0.9" vector-effect="non-scaling-stroke"/><path d="M630 430 C700 420 780 410 850 420 L890 460 C830 460 760 470 690 490 M640 460 C720 470 760 480 780 490" stroke-width="0.9" vector-effect="non-scaling-stroke"/><path d="M805 490 L880 480 L920 540 C880 560 840 570 820 560 Z" stroke-width="0.9" vector-effect="non-scaling-stroke"/><path d="M760 480 C800 560 840 640 890 690 L1000 670 L1070 680" stroke-width="0.9" vector-effect="non-scaling-stroke"/><path d="M900 75 L980 75 C1040 80 1100 110 1130 160 L1180 190 L1190 230 L1160 290 L1100 300 L1000 270 C960 250 930 200 900 150 Z" stroke-width="0.9" vector-effect="non-scaling-stroke"/><path d="M960 190 L1110 160 M1080 180 C1060 200 1060 260 1090 280 M1120 170 L1180 200 M1110 250 L1170 270" stroke-width="0.9" vector-effect="non-scaling-stroke"/><path d="M1180 290 C1230 300 1280 330 1300 370 L1310 400 L1290 440 C1250 460 1200 470 1150 480 L1110 570 C1080 640 1060 700 1040 760 C1000 880 940 980 880 1048" stroke-width="0.9" vector-effect="non-scaling-stroke"/><path d="M830 250 C840 380 900 520 980 600 L1030 650 M1110 570 C1000 500 940 450 900 390" stroke-width="0.9" vector-effect="non-scaling-stroke"/><path d="M970 690 L1060 680 L1250 810 L1240 840 L1110 860 L1090 850 L1000 820 C950 790 920 750 900 700 M1130 840 C1160 830 1200 820 1240 820" stroke-width="0.9" vector-effect="non-scaling-stroke"/><path d="M850 255 C880 250 920 240 960 230 M830 380 C920 360 1000 340 1100 320" stroke-width="0.9" vector-effect="non-scaling-stroke"/><path d="M0 600 C50 560 120 520 175 490 M0 790 C80 810 200 830 350 820 M70 750 C150 720 220 700 290 680" stroke-width="0.9" vector-effect="non-scaling-stroke"/><path d="M0 890 C30 920 40 980 30 1048 M550 1048 C620 1000 700 960 760 930" stroke-width="0.9" vector-effect="non-scaling-stroke"/><path d="M1000 0 C990 60 960 120 940 170 M600 60 C680 60 740 70 780 90" stroke-width="0.9" vector-effect="non-scaling-stroke"/><path d="M365 720 L412 915" stroke-width="2" vector-effect="non-scaling-stroke"/><path d="M430 660 L445 700" stroke-width="2" vector-effect="non-scaling-stroke"/><path d="M610 825 L640 828" stroke-width="2" vector-effect="non-scaling-stroke"/></g></g></svg>
<svg style="left:1772px;top:92px;overflow:hidden" width="129" height="159" viewBox="0 0 704 867" preserveAspectRatio="none"><g fill="none" stroke="#6a6a6a" stroke-linecap="round" stroke-linejoin="round" opacity="0.85"><g transform="translate(0 0) scale(0.26427)"><path d="M465 425 C470 330 540 262 700 248 C830 245 900 330 905 420 L940 485" stroke-width="0.3" vector-effect="non-scaling-stroke"/><path d="M905 420 C900 500 880 560 850 640 L820 700" stroke-width="0.3" vector-effect="non-scaling-stroke"/><path d="M465 425 C455 500 450 600 452 670" stroke-width="0.3" vector-effect="non-scaling-stroke"/><path d="M452 668 L520 600 L525 720 L580 690" stroke-width="0.3" vector-effect="non-scaling-stroke"/><path d="M520 590 C535 650 580 695 640 705 C690 700 720 660 735 620" stroke-width="0.3" vector-effect="non-scaling-stroke"/><path d="M560 400 C570 470 580 520 595 565" stroke-width="0.3" vector-effect="non-scaling-stroke"/><path d="M620 300 C630 400 640 480 660 560" stroke-width="0.3" vector-effect="non-scaling-stroke"/><path d="M690 330 C720 420 760 500 780 585" stroke-width="0.3" vector-effect="non-scaling-stroke"/><path d="M770 360 C780 450 760 520 745 580" stroke-width="0.3" vector-effect="non-scaling-stroke"/><path d="M840 360 C870 420 900 470 935 485" stroke-width="0.3" vector-effect="non-scaling-stroke"/><path d="M625 420 C660 410 720 415 745 430" stroke-width="0.3" vector-effect="non-scaling-stroke"/><path d="M515 470 C500 490 505 540 530 550 C560 555 570 520 560 490 C555 470 530 465 515 470" stroke-width="0.3" vector-effect="non-scaling-stroke"/><path d="M650 495 C640 510 640 550 665 560 C700 570 720 540 715 510 C710 490 680 488 650 495" stroke-width="0.3" vector-effect="non-scaling-stroke"/><path d="M625 610 Q640 600 650 615 Q665 600 680 612" stroke-width="0.3" vector-effect="non-scaling-stroke"/><path d="M590 640 C580 650 590 660 600 655" stroke-width="0.3" vector-effect="non-scaling-stroke"/><path d="M720 690 L700 740 L730 700 L760 760" stroke-width="0.3" vector-effect="non-scaling-stroke"/><path d="M0 91 L113 176" stroke-width="0.7" vector-effect="non-scaling-stroke"/><path d="M129 171 L235 256" stroke-width="0.7" vector-effect="non-scaling-stroke"/><path d="M129 171 C90 215 62 280 52 333" stroke-width="0.7" vector-effect="non-scaling-stroke"/><path d="M52 333 L235 382" stroke-width="0.7" vector-effect="non-scaling-stroke"/><path d="M0 277 L52 305" stroke-width="0.7" vector-effect="non-scaling-stroke"/><path d="M22 152 L45 134 L87 164 L75 193 L35 172 Z" stroke-width="0.7" vector-effect="non-scaling-stroke"/><path d="M0 240 L30 235 L22 272 L0 265" stroke-width="0.7" vector-effect="non-scaling-stroke"/><path d="M169 211 C127 253 110 305 113 350" stroke-width="0.7" vector-effect="non-scaling-stroke"/><path d="M134 303 L160 300 L220 328 L162 338 Z" stroke-width="0.7" vector-effect="non-scaling-stroke"/><path d="M252 175 L262 190 L240 225 L245 250 C230 330 230 400 245 425 L240 440 L265 445 C300 480 360 490 420 480 C500 460 545 380 545 300 C545 200 470 120 390 120 C330 120 290 140 252 175" stroke-width="0.7" vector-effect="non-scaling-stroke"/><path d="M239 260 L385 251 L432 296 L366 319 L436 361 L404 441 L357 439" stroke-width="0.7" vector-effect="non-scaling-stroke"/><path d="M293 429 L310 267 L361 439 M293 429 L324 404 L357 439" stroke-width="0.7" vector-effect="non-scaling-stroke"/><path d="M357 291 L390 284 M375 394 L408 387" stroke-width="0.7" vector-effect="non-scaling-stroke"/><path d="M380 164 C328 169 263 202 239 256" stroke-width="0.7" vector-effect="non-scaling-stroke"/><path d="M495 455 L545 470" stroke-width="0.7" vector-effect="non-scaling-stroke"/><path d="M630 492 C670 475 720 472 755 478" stroke-width="0.7" vector-effect="non-scaling-stroke"/><path d="M697 432 L700 500" stroke-width="0.7" vector-effect="non-scaling-stroke"/></g><g transform="translate(352 0) scale(0.26427)"><path d="M615 135 C580 110 530 130 522 180 C520 215 540 235 560 235" stroke-width="0.3" vector-effect="non-scaling-stroke"/><path d="M815 145 C840 110 900 110 920 160 C935 210 900 240 860 230" stroke-width="0.3" vector-effect="non-scaling-stroke"/><path d="M540 245 C570 170 640 125 720 122 C800 120 870 160 900 245 C915 300 920 370 925 420" stroke-width="0.3" vector-effect="non-scaling-stroke"/><path d="M540 245 C520 300 520 360 545 420 L560 480 L605 530" stroke-width="0.3" vector-effect="non-scaling-stroke"/><path d="M925 420 L895 400 L880 470 L860 500 L845 510" stroke-width="0.3" vector-effect="non-scaling-stroke"/><path d="M600 470 C620 500 660 520 700 528 C740 528 770 510 790 490" stroke-width="0.3" vector-effect="non-scaling-stroke"/><path d="M600 250 C605 320 615 370 625 400" stroke-width="0.3" vector-effect="non-scaling-stroke"/><path d="M650 240 C660 300 650 360 640 380" stroke-width="0.3" vector-effect="non-scaling-stroke"/><path d="M700 240 C730 300 760 360 770 410" stroke-width="0.3" vector-effect="non-scaling-stroke"/><path d="M740 245 C790 300 810 370 810 430" stroke-width="0.3" vector-effect="non-scaling-stroke"/><path d="M690 300 C720 280 760 290 790 330" stroke-width="0.3" vector-effect="non-scaling-stroke"/><path d="M585 410 C570 380 600 360 630 375 C660 390 660 430 640 440 C610 450 590 435 585 410" stroke-width="0.3" vector-effect="non-scaling-stroke"/><path d="M650 470 C680 485 720 485 755 462" stroke-width="0.3" vector-effect="non-scaling-stroke"/><path d="M740 400 L760 410 L750 420 L775 405" stroke-width="0.3" vector-effect="non-scaling-stroke"/><path d="M530 350 L600 330 M535 365 L600 345" stroke-width="0.3" vector-effect="non-scaling-stroke"/><path d="M530 245 L390 312 C365 330 365 360 375 375 L420 440 C460 520 510 570 548 600" stroke-width="0.3" vector-effect="non-scaling-stroke"/><path d="M445 380 C470 370 505 370 530 400" stroke-width="0.3" vector-effect="non-scaling-stroke"/><path d="M548 600 C580 570 620 545 680 540 C750 545 800 550 840 570 C890 600 910 640 905 690 C900 720 880 750 870 760" stroke-width="0.3" vector-effect="non-scaling-stroke"/><path d="M548 600 C500 640 480 690 485 730 C500 780 560 790 620 790 C700 800 750 830 775 850 C820 820 840 760 838 700 C835 650 820 610 810 580" stroke-width="0.3" vector-effect="non-scaling-stroke"/><path d="M560 615 C600 600 650 610 700 650" stroke-width="0.3" vector-effect="non-scaling-stroke"/><path d="M620 560 C660 600 680 640 700 660" stroke-width="0.3" vector-effect="non-scaling-stroke"/><path d="M565 720 C640 710 700 730 760 760" stroke-width="0.3" vector-effect="non-scaling-stroke"/><path d="M0 640 L50 620 L65 680 L20 700 L0 690 M10 660 L50 650" stroke-width="0.3" vector-effect="non-scaling-stroke"/><path d="M705 385 C730 360 760 350 785 345" stroke-width="0.7" vector-effect="non-scaling-stroke"/><path d="M575 395 L595 385" stroke-width="0.7" vector-effect="non-scaling-stroke"/></g><g transform="translate(0 277) scale(0.26427)"><path d="M560 200 C560 500 540 800 530 1048" stroke-width="0.3" vector-effect="non-scaling-stroke"/><path d="M325 620 L335 785" stroke-width="0.3" vector-effect="non-scaling-stroke"/></g><g transform="translate(352 277) scale(0.26427)"></g><g transform="translate(0 554) scale(0.29860)"><path d="M725 120 C800 120 850 160 860 200 C870 300 850 420 860 560 C870 640 860 700 820 720" stroke-width="0.3" vector-effect="non-scaling-stroke"/><path d="M290 225 C280 300 290 360 330 410 L385 400" stroke-width="0.3" vector-effect="non-scaling-stroke"/><path d="M330 250 L360 300 M300 320 L380 320" stroke-width="0.3" vector-effect="non-scaling-stroke"/><path d="M385 300 C380 240 420 210 500 220 C560 225 700 280 750 380 C740 450 700 500 640 510 C560 510 440 480 400 420 C380 380 385 330 385 300" stroke-width="0.3" vector-effect="non-scaling-stroke"/><path d="M480 240 L520 300 L560 280 C620 280 680 290 730 310" stroke-width="0.3" vector-effect="non-scaling-stroke"/><path d="M440 490 Q470 480 500 495 Q540 490 580 505 Q620 500 660 505 Q700 495 740 480" stroke-width="0.3" vector-effect="non-scaling-stroke"/><path d="M450 520 Q480 540 510 530 Q560 545 600 535 Q650 545 710 540" stroke-width="0.3" vector-effect="non-scaling-stroke"/><path d="M460 540 C460 600 455 640 440 700 C410 760 370 860 350 1048" stroke-width="0.3" vector-effect="non-scaling-stroke"/><path d="M720 545 C720 620 730 680 760 760 C790 840 820 920 840 1048" stroke-width="0.3" vector-effect="non-scaling-stroke"/><path d="M400 700 C380 800 380 900 385 1000" stroke-width="0.3" vector-effect="non-scaling-stroke"/><path d="M470 850 C550 880 650 870 722 830" stroke-width="0.3" vector-effect="non-scaling-stroke"/><path d="M470 950 C560 925 640 905 682 900" stroke-width="0.3" vector-effect="non-scaling-stroke"/><path d="M385 1000 Q420 1020 460 1005 Q500 1025 540 1005 Q580 1025 620 1005 Q660 1025 700 1005 Q740 1025 780 1005 Q810 1020 840 1005" stroke-width="0.3" vector-effect="non-scaling-stroke"/><path d="M520 720 C570 690 620 640 650 580" stroke-width="0.3" vector-effect="non-scaling-stroke"/><path d="M620 720 C660 700 690 680 700 670" stroke-width="0.3" vector-effect="non-scaling-stroke"/><path d="M560 780 C560 900 570 980 580 1048" stroke-width="0.3" vector-effect="non-scaling-stroke"/><path d="M760 560 C790 620 800 700 790 760" stroke-width="0.3" vector-effect="non-scaling-stroke"/><path d="M800 720 L860 740 L840 810 L800 760 Z" stroke-width="0.3" vector-effect="non-scaling-stroke"/><path d="M830 820 C870 900 900 980 920 1048" stroke-width="0.3" vector-effect="non-scaling-stroke"/><path d="M1130 0 C1140 40 1150 80 1160 110 L1179 100" stroke-width="0.3" vector-effect="non-scaling-stroke"/><path d="M860 230 C870 280 870 330 860 380" stroke-width="0.3" vector-effect="non-scaling-stroke"/><path d="M520 350 L580 380 M460 300 L500 440 M540 280 L560 440 M600 300 L610 460 M650 320 L650 480 M700 330 L690 470" stroke-width="0.3" vector-effect="non-scaling-stroke"/></g><g transform="translate(352 554) scale(0.29860)"><path d="M100 0 C105 40 120 80 170 115 C210 115 240 100 245 40 L225 0" stroke-width="0.3" vector-effect="non-scaling-stroke"/><path d="M0 60 L70 30 M60 0 L75 40" stroke-width="0.3" vector-effect="non-scaling-stroke"/><path d="M400 260 L420 295 L510 330 L520 300" stroke-width="0.3" vector-effect="non-scaling-stroke"/><path d="M620 330 L860 320 L860 400 L630 400 Z" stroke-width="0.3" vector-effect="non-scaling-stroke"/><path d="M625 350 L860 345 M625 370 L860 365 M628 390 L860 385" stroke-width="0.3" vector-effect="non-scaling-stroke"/><path d="M610 400 C570 480 520 600 460 700 L410 760 C430 790 480 810 560 830 C640 840 700 830 760 805 L820 760 C850 680 870 560 865 450 L850 400" stroke-width="0.3" vector-effect="non-scaling-stroke"/><path d="M785 330 L665 830 M770 330 L650 830" stroke-width="0.3" vector-effect="non-scaling-stroke"/><path d="M560 560 C530 640 520 700 520 750" stroke-width="0.3" vector-effect="non-scaling-stroke"/><path d="M650 520 C630 620 620 700 620 760" stroke-width="0.3" vector-effect="non-scaling-stroke"/><path d="M810 440 C810 560 800 680 800 750" stroke-width="0.3" vector-effect="non-scaling-stroke"/><path d="M390 290 C360 380 330 480 290 560 C260 640 220 700 175 760 C180 800 210 825 260 810 C280 780 290 730 310 700 C350 620 420 500 485 330" stroke-width="0.3" vector-effect="non-scaling-stroke"/><path d="M450 800 C430 880 420 960 410 1048" stroke-width="0.3" vector-effect="non-scaling-stroke"/><path d="M660 830 C640 870 620 920 590 960 L570 1048" stroke-width="0.3" vector-effect="non-scaling-stroke"/><path d="M820 760 C800 820 760 880 680 930 C650 950 630 970 620 990" stroke-width="0.3" vector-effect="non-scaling-stroke"/><path d="M590 930 C600 960 620 980 640 990 M610 900 L650 920" stroke-width="0.3" vector-effect="non-scaling-stroke"/><path d="M450 800 L500 810 M650 830 L665 840" stroke-width="0.7" vector-effect="non-scaling-stroke"/></g><g transform="translate(80 177) scale(0.24814)"><path d="M35 125 C60 110 100 100 130 100 C170 95 210 100 240 120 L270 130 C250 170 220 200 180 210 L130 215 C90 210 60 190 35 140 Z" stroke-width="0.3" vector-effect="non-scaling-stroke"/><path d="M60 140 L130 150 M70 165 L130 175 M100 100 L120 130 M140 130 C170 120 200 120 230 130" stroke-width="0.3" vector-effect="non-scaling-stroke"/><path d="M200 200 L300 150 M210 215 L315 165 M225 230 L330 180 M240 248 L340 195" stroke-width="0.3" vector-effect="non-scaling-stroke"/><path d="M190 0 L250 60 L270 10 L300 60 L330 0 M420 0 L440 80 L470 20 L490 70 L520 0 L550 50" stroke-width="0.3" vector-effect="non-scaling-stroke"/><path d="M330 90 C300 120 290 150 280 200" stroke-width="0.3" vector-effect="non-scaling-stroke"/><path d="M410 100 C460 100 520 110 540 170 C545 250 530 350 500 420" stroke-width="0.3" vector-effect="non-scaling-stroke"/><path d="M240 250 C200 270 175 300 170 330 C168 380 180 420 210 430 L170 460 L175 570 L240 560" stroke-width="0.3" vector-effect="non-scaling-stroke"/><path d="M200 440 C260 430 350 420 400 430 L480 420 M470 200 L480 250" stroke-width="0.3" vector-effect="non-scaling-stroke"/><path d="M240 120 C330 200 420 300 480 380 C540 470 600 560 650 640" stroke-width="0.3" vector-effect="non-scaling-stroke"/><path d="M330 210 C420 330 500 450 560 560 C620 680 700 830 760 1048" stroke-width="0.3" vector-effect="non-scaling-stroke"/><path d="M280 600 L290 1048 M380 560 L400 1048 M440 600 L460 1000 M520 600 L570 1048 M340 660 L420 560" stroke-width="0.3" vector-effect="non-scaling-stroke"/><path d="M480 280 C520 240 580 240 620 250 C650 220 700 200 740 205 C830 220 920 300 1000 400 L1065 485" stroke-width="0.3" vector-effect="non-scaling-stroke"/><path d="M520 300 C500 350 480 420 490 500 C500 560 540 620 600 680" stroke-width="0.3" vector-effect="non-scaling-stroke"/><path d="M640 430 C680 480 720 520 700 600 M740 380 C760 440 800 480 820 460 M770 370 C800 420 850 470 900 460" stroke-width="0.3" vector-effect="non-scaling-stroke"/><path d="M640 480 C700 495 760 500 800 490 M930 430 C960 500 1000 560 1020 600 L1000 660" stroke-width="0.3" vector-effect="non-scaling-stroke"/><path d="M680 620 C700 700 760 750 830 760 C900 750 950 720 990 660" stroke-width="0.3" vector-effect="non-scaling-stroke"/><path d="M950 480 C990 520 1020 580 1020 680" stroke-width="0.3" vector-effect="non-scaling-stroke"/><path d="M780 670 C800 700 850 720 880 710 C910 690 920 660 915 630 C870 640 820 650 780 670 Z" stroke-width="0.3" vector-effect="non-scaling-stroke"/><path d="M740 660 L760 650 L780 662 L800 645 M900 560 L920 590 L940 578 L950 600" stroke-width="0.3" vector-effect="non-scaling-stroke"/><path d="M905 210 C930 170 950 130 1000 115 C1040 105 1080 100 1100 110 C1110 180 1100 250 1090 330 C1100 400 1115 460 1100 560 L1050 700" stroke-width="0.3" vector-effect="non-scaling-stroke"/><path d="M905 210 C910 300 925 400 940 500 L930 600" stroke-width="0.3" vector-effect="non-scaling-stroke"/><path d="M950 90 L1070 100 M945 110 L1075 118 M945 130 L1080 138 M945 150 L1080 158" stroke-width="0.3" vector-effect="non-scaling-stroke"/><path d="M980 0 C990 40 1020 70 1060 80 C1110 80 1160 40 1165 0" stroke-width="0.3" vector-effect="non-scaling-stroke"/><path d="M470 270 C450 330 470 450 540 560 C620 680 700 760 800 820 C900 870 980 860 1050 820" stroke-width="0.3" vector-effect="non-scaling-stroke"/><path d="M380 700 C480 800 620 860 760 880" stroke-width="0.3" vector-effect="non-scaling-stroke"/><path d="M430 640 C560 780 720 900 900 960 C1000 990 1100 1010 1200 1048" stroke-width="0.3" vector-effect="non-scaling-stroke"/><path d="M950 700 C1050 700 1150 740 1200 800 C1230 860 1220 940 1180 1000" stroke-width="0.3" vector-effect="non-scaling-stroke"/><path d="M960 740 L1010 770 L1070 775 L1020 745 M1100 820 C1130 900 1120 980 1100 1048" stroke-width="0.3" vector-effect="non-scaling-stroke"/><path d="M800 830 C830 900 880 950 900 1000" stroke-width="0.3" vector-effect="non-scaling-stroke"/><path d="M680 630 C700 590 750 565 800 565" stroke-width="0.7" vector-effect="non-scaling-stroke"/><path d="M845 530 C860 500 890 480 920 480" stroke-width="0.7" vector-effect="non-scaling-stroke"/><path d="M345 40 L380 30 L352 78" stroke-width="0.7" vector-effect="non-scaling-stroke"/><circle cx="865" cy="360" r="45" fill="#f4ecd0" stroke="#c39a45" stroke-width="12"/><circle cx="820" cy="350" r="14" fill="#c39a45"/><circle cx="910" cy="350" r="14" fill="#c39a45"/><circle cx="905" cy="380" r="12" fill="#c39a45"/><path d="M835 320 L855 280 L870 320" fill="none" stroke="#c39a45" stroke-width="8"/></g><g transform="translate(440 407) scale(0.22899)"><path d="M250 130 C320 60 420 10 520 5 C620 5 700 70 720 180 C730 260 725 350 700 440" stroke-width="0.3" vector-effect="non-scaling-stroke"/><path d="M250 130 C180 200 130 300 120 400 C125 480 160 580 200 650" stroke-width="0.3" vector-effect="non-scaling-stroke"/><path d="M400 160 C380 250 390 330 430 400 M440 140 C450 260 480 350 520 410 M520 140 C530 200 560 260 560 300" stroke-width="0.3" vector-effect="non-scaling-stroke"/><path d="M560 180 C600 260 650 320 670 380 M330 230 C360 240 400 250 420 255" stroke-width="0.3" vector-effect="non-scaling-stroke"/><path d="M450 70 C480 80 520 90 560 80 M470 100 C500 110 540 110 580 100" stroke-width="0.3" vector-effect="non-scaling-stroke"/><path d="M650 380 C660 450 660 520 640 560 C620 600 590 620 560 640 M700 440 C700 500 690 560 660 620 L640 650" stroke-width="0.3" vector-effect="non-scaling-stroke"/><path d="M150 400 C180 480 210 560 240 650 M230 480 C230 560 250 620 280 660 M180 560 L200 660" stroke-width="0.3" vector-effect="non-scaling-stroke"/><path d="M280 420 C290 500 320 560 380 600 C420 630 460 640 480 630 C520 620 570 590 600 560" stroke-width="0.3" vector-effect="non-scaling-stroke"/><path d="M490 460 C500 480 500 490 490 500 M410 545 C450 560 490 560 520 545" stroke-width="0.3" vector-effect="non-scaling-stroke"/><path d="M300 490 L320 480 L340 495 L360 485 M550 505 L570 495 L590 510 L605 500" stroke-width="0.3" vector-effect="non-scaling-stroke"/><path d="M300 360 C290 400 300 440 340 450 C380 455 400 420 390 380 C380 350 330 340 300 360" stroke-width="0.3" vector-effect="non-scaling-stroke"/><path d="M540 390 C535 420 550 460 580 460 C620 460 630 420 620 390 C600 370 560 370 540 390" stroke-width="0.3" vector-effect="non-scaling-stroke"/><path d="M560 250 L650 210 M570 270 L660 230 M580 290 L670 250" stroke-width="0.3" vector-effect="non-scaling-stroke"/><path d="M330 600 C350 700 370 800 390 1048 M350 600 C370 700 390 800 410 1048" stroke-width="0.3" vector-effect="non-scaling-stroke"/><path d="M480 640 C520 680 580 720 640 760" stroke-width="0.3" vector-effect="non-scaling-stroke"/><path d="M470 800 C460 860 480 930 500 940 C520 900 520 840 500 800 Z" stroke-width="0.3" vector-effect="non-scaling-stroke"/><path d="M510 780 C570 760 650 770 660 800 C620 820 560 820 510 800" stroke-width="0.3" vector-effect="non-scaling-stroke"/><path d="M520 830 L580 1000 L620 990 L560 820 M560 800 L720 880 L700 890" stroke-width="0.3" vector-effect="non-scaling-stroke"/><path d="M200 760 C220 700 280 660 330 650 M640 660 C700 680 760 760 780 850 C790 900 780 940 770 960" stroke-width="0.3" vector-effect="non-scaling-stroke"/><path d="M400 1000 C550 1000 700 980 770 940" stroke-width="0.3" vector-effect="non-scaling-stroke"/><path d="M360 700 C420 690 470 700 510 740 M380 740 C440 740 500 760 540 790" stroke-width="0.3" vector-effect="non-scaling-stroke"/><path d="M180 800 Q220 820 260 830 Q300 820 340 840 Q380 830 420 850" stroke-width="0.3" vector-effect="non-scaling-stroke"/><path d="M150 860 Q200 880 240 870 Q280 890 320 880 Q360 900 400 890" stroke-width="0.3" vector-effect="non-scaling-stroke"/><path d="M140 900 L180 960 L260 940 L340 980 M130 990 Q160 1010 190 1000 Q220 1020 250 1010" stroke-width="0.3" vector-effect="non-scaling-stroke"/><path d="M520 740 Q560 730 600 740 Q640 720 680 740 L700 760 M600 660 L640 680 L690 720" stroke-width="0.3" vector-effect="non-scaling-stroke"/><path d="M740 700 L760 660 L950 500 L980 510 L990 540 L800 700 L790 740 L760 740 Z" stroke-width="0.3" vector-effect="non-scaling-stroke"/><path d="M800 650 L960 520 M830 680 L880 740 L920 720" stroke-width="0.3" vector-effect="non-scaling-stroke"/><path d="M880 720 C930 690 980 690 970 720 C950 740 910 740 880 730" stroke-width="0.3" vector-effect="non-scaling-stroke"/><path d="M780 790 C800 760 830 760 850 780 L870 750 C900 740 940 760 950 790 C955 820 930 840 900 840 L850 860 C820 880 800 900 790 950" stroke-width="0.3" vector-effect="non-scaling-stroke"/><path d="M870 770 L930 770 M875 800 L935 800 M880 825 L930 830" stroke-width="0.3" vector-effect="non-scaling-stroke"/><path d="M790 950 C810 1000 820 1030 820 1048 M770 850 C760 900 760 980 750 1048" stroke-width="0.3" vector-effect="non-scaling-stroke"/><path d="M0 130 C60 90 120 60 200 30 M20 330 C80 280 140 240 220 200" stroke-width="0.3" vector-effect="non-scaling-stroke"/><path d="M40 100 C60 200 60 300 20 400 M100 80 L180 250 M180 0 L300 180" stroke-width="0.3" vector-effect="non-scaling-stroke"/><path d="M0 540 L120 420 L200 380" stroke-width="0.3" vector-effect="non-scaling-stroke"/><path d="M255 330 C300 310 360 320 410 350" stroke-width="0.7" vector-effect="non-scaling-stroke"/><path d="M280 340 L290 405" stroke-width="0.7" vector-effect="non-scaling-stroke"/><path d="M530 355 C580 340 630 350 665 370" stroke-width="0.7" vector-effect="non-scaling-stroke"/><path d="M630 362 L640 412" stroke-width="0.7" vector-effect="non-scaling-stroke"/><path d="M320 570 L350 590" stroke-width="0.7" vector-effect="non-scaling-stroke"/><circle cx="655" cy="300" r="28" fill="#f4ecd0" stroke="#c39a45" stroke-width="10"/><circle cx="630" cy="280" r="9" fill="#c39a45"/><circle cx="680" cy="325" r="9" fill="#c39a45"/><path d="M670 275 L690 260 L685 290" fill="#c39a45"/></g><g transform="translate(90 432) scale(0.20991)"><path d="M670 90 C700 40 780 15 850 30 C930 60 980 140 965 220 C955 260 930 290 900 300" stroke-width="0.3" vector-effect="non-scaling-stroke"/><path d="M760 60 C820 90 880 150 920 230 M730 70 C800 110 860 180 890 260" stroke-width="0.3" vector-effect="non-scaling-stroke"/><path d="M180 350 C210 230 300 140 420 100 C520 70 640 90 720 130 C820 180 880 280 890 380 C895 480 860 560 800 620 C760 660 720 690 680 700" stroke-width="0.3" vector-effect="non-scaling-stroke"/><path d="M340 200 C380 170 420 150 460 140 L490 130 L520 150 L560 180 L575 240 C500 220 420 205 340 200 Z" stroke-width="0.3" vector-effect="non-scaling-stroke"/><path d="M350 270 C380 350 410 430 440 480 L445 440 C430 370 440 300 460 290" stroke-width="0.3" vector-effect="non-scaling-stroke"/><path d="M480 270 C560 280 640 310 680 360 M520 300 C580 380 620 460 640 520 C680 580 690 650 670 720" stroke-width="0.3" vector-effect="non-scaling-stroke"/><path d="M560 460 C600 520 620 560 640 620 M700 200 C760 300 790 400 780 520" stroke-width="0.3" vector-effect="non-scaling-stroke"/><path d="M285 390 C280 440 290 480 330 490 C360 490 370 450 360 410 C350 380 310 370 285 390" stroke-width="0.3" vector-effect="non-scaling-stroke"/><path d="M495 420 C485 470 500 530 540 545 C580 550 595 510 590 470 C585 430 540 410 495 420" stroke-width="0.3" vector-effect="non-scaling-stroke"/><path d="M240 470 C260 560 300 640 350 690 C390 720 440 730 480 725 C540 715 590 690 620 660" stroke-width="0.3" vector-effect="non-scaling-stroke"/><path d="M380 620 C420 640 480 640 515 630 C490 660 460 670 440 665 C420 655 400 640 380 620" stroke-width="0.3" vector-effect="non-scaling-stroke"/><path d="M300 520 L320 510 L340 530 M510 590 L530 580 L550 595 L570 585" stroke-width="0.3" vector-effect="non-scaling-stroke"/><path d="M130 700 C140 600 180 520 240 460 L260 470 L250 690 L330 690 M240 470 L230 600 L260 690" stroke-width="0.3" vector-effect="non-scaling-stroke"/><path d="M180 500 C150 550 130 620 130 700" stroke-width="0.3" vector-effect="non-scaling-stroke"/><path d="M380 740 Q400 760 430 750 Q460 765 490 752 Q520 768 550 755 Q580 768 610 750" stroke-width="0.3" vector-effect="non-scaling-stroke"/><path d="M640 560 C670 620 690 690 660 760 L600 800" stroke-width="0.3" vector-effect="non-scaling-stroke"/><path d="M610 760 C700 760 770 790 790 840 C800 900 790 960 800 1048" stroke-width="0.3" vector-effect="non-scaling-stroke"/><path d="M100 800 L150 780 L240 810 L220 870 L120 850 Z M40 850 C20 900 10 960 0 1048 M120 880 C180 900 250 920 300 900" stroke-width="0.3" vector-effect="non-scaling-stroke"/><path d="M180 1048 C200 960 260 900 340 880 C420 870 520 890 600 950 M290 950 C350 940 420 960 480 990" stroke-width="0.3" vector-effect="non-scaling-stroke"/><path d="M350 840 L355 870 M415 840 L415 875 M490 845 L495 880 M550 840 L555 860 M590 820 L600 830" stroke-width="0.3" vector-effect="non-scaling-stroke"/><path d="M250 0 L270 300 M350 0 L420 250 M420 0 L430 90 M500 0 L540 120 M660 0 L670 100" stroke-width="0.3" vector-effect="non-scaling-stroke"/><path d="M0 100 Q100 110 240 90 M560 0 C600 200 640 400 660 560 M400 300 L420 1048 M600 850 L620 1048" stroke-width="0.3" vector-effect="non-scaling-stroke"/><path d="M245 355 C290 345 330 360 360 400" stroke-width="0.7" vector-effect="non-scaling-stroke"/><path d="M265 370 L270 430" stroke-width="0.7" vector-effect="non-scaling-stroke"/><path d="M460 415 C520 400 590 410 640 450" stroke-width="0.7" vector-effect="non-scaling-stroke"/><path d="M610 440 L620 490" stroke-width="0.7" vector-effect="non-scaling-stroke"/><path d="M455 290 L460 330" stroke-width="0.7" vector-effect="non-scaling-stroke"/><path d="M560 690 L610 670" stroke-width="0.7" vector-effect="non-scaling-stroke"/><path d="M390 780 C440 800 520 805 600 775" stroke-width="0.7" vector-effect="non-scaling-stroke"/></g><g transform="translate(310 197) scale(0.38153)"><path d="M0 420 L60 415 C120 430 170 460 185 500 C195 540 180 590 150 610 C110 625 60 630 0 625" stroke-width="0.3" vector-effect="non-scaling-stroke"/><path d="M60 440 C100 460 140 500 160 560 M20 460 C60 500 80 540 100 600 M100 440 C130 480 150 520 160 580" stroke-width="0.3" vector-effect="non-scaling-stroke"/><path d="M40 640 C30 720 30 800 60 900 C80 960 95 1000 100 1040" stroke-width="0.3" vector-effect="non-scaling-stroke"/><path d="M180 560 C210 620 240 660 290 680 C330 660 400 600 460 560 C520 520 570 500 630 480" stroke-width="0.3" vector-effect="non-scaling-stroke"/><path d="M110 700 C130 680 160 675 190 690 C220 720 240 780 250 830 C270 890 300 950 295 1000 C290 1020 250 1030 220 1025 C180 1010 140 960 120 920 C110 880 108 800 110 700 Z" stroke-width="0.3" vector-effect="non-scaling-stroke"/><path d="M140 880 L250 835 M150 940 L270 890" stroke-width="0.3" vector-effect="non-scaling-stroke"/><path d="M160 860 C220 870 290 880 330 870 C360 850 380 820 390 790" stroke-width="0.3" vector-effect="non-scaling-stroke"/><path d="M350 720 L440 640 M380 780 C400 720 420 680 460 640" stroke-width="0.3" vector-effect="non-scaling-stroke"/><path d="M450 550 L520 660 M480 545 L555 650" stroke-width="0.3" vector-effect="non-scaling-stroke"/><path d="M300 860 L345 870" stroke-width="0.7" vector-effect="non-scaling-stroke"/></g><g transform="translate(25 327) scale(0.12404)"><path d="M620 360 L700 380 L660 540 L640 700 M850 540 C900 580 980 620 1048 640 M880 470 L1020 520 M1000 20 L1010 560 L1048 600" stroke-width="0.3" vector-effect="non-scaling-stroke"/><path d="M480 910 L520 1048 M490 920 C600 910 700 930 800 940 L900 930 L920 1048" stroke-width="0.3" vector-effect="non-scaling-stroke"/><path d="M640 700 L650 920 M700 700 L720 930 M820 690 L860 970 M790 700 L820 960" stroke-width="0.3" vector-effect="non-scaling-stroke"/><path d="M830 0 L620 340 M920 0 L700 280" stroke-width="0.3" vector-effect="non-scaling-stroke"/><path d="M60 600 C50 700 100 790 190 830 C240 910 330 965 440 965 C580 960 710 870 790 720" stroke-width="0.7" vector-effect="non-scaling-stroke"/><path d="M60 600 C80 470 170 360 260 300 C300 280 360 280 385 300" stroke-width="0.7" vector-effect="non-scaling-stroke"/><path d="M300 330 C360 320 450 370 560 480 C640 570 700 650 750 720" stroke-width="0.7" vector-effect="non-scaling-stroke"/><path d="M300 330 C250 390 220 470 230 520 L250 600" stroke-width="0.7" vector-effect="non-scaling-stroke"/><path d="M245 600 C300 590 380 580 420 590 L380 690 C430 670 500 680 540 690 L640 580" stroke-width="0.7" vector-effect="non-scaling-stroke"/><path d="M290 510 L330 470 M420 450 C450 460 470 480 480 500 M450 640 L490 600" stroke-width="0.7" vector-effect="non-scaling-stroke"/><path d="M570 210 C620 150 660 100 700 100 C760 110 860 250 905 340 C910 380 880 410 820 420" stroke-width="0.7" vector-effect="non-scaling-stroke"/><path d="M570 210 C650 260 740 330 820 420" stroke-width="0.7" vector-effect="non-scaling-stroke"/><path d="M420 350 L510 215 M450 360 L540 225 M510 180 C520 160 560 150 580 165 L560 220" stroke-width="0.7" vector-effect="non-scaling-stroke"/><path d="M750 140 L790 95 M770 150 L800 110 M770 70 L830 90 L800 110 L770 70 Z" stroke-width="0.7" vector-effect="non-scaling-stroke"/><path d="M880 270 L930 240 M890 290 L940 260 M910 190 L960 230 L930 260 Z" stroke-width="0.7" vector-effect="non-scaling-stroke"/><path d="M640 530 L840 440 M660 580 L860 480 M830 430 C870 430 880 480 850 500" stroke-width="0.7" vector-effect="non-scaling-stroke"/><path d="M520 400 L560 340 L600 320 L580 380 Z" stroke-width="0.7" vector-effect="non-scaling-stroke"/></g><g transform="translate(374 177) scale(0.21368)"><path d="M100 320 C100 250 120 180 160 140 L215 115 L280 140 C360 190 450 250 520 340 C560 360 580 380 610 420 C650 470 690 510 720 560" stroke-width="0.3" vector-effect="non-scaling-stroke"/><path d="M100 320 C130 360 160 400 175 440 C200 520 240 600 290 680" stroke-width="0.3" vector-effect="non-scaling-stroke"/><path d="M135 170 C150 300 180 420 230 520 C250 570 270 620 300 650 M155 180 C170 300 200 420 250 510" stroke-width="0.3" vector-effect="non-scaling-stroke"/><path d="M270 230 C330 320 380 430 410 540 L430 600" stroke-width="0.3" vector-effect="non-scaling-stroke"/><path d="M290 680 L340 700 L380 690 L430 660 L435 600" stroke-width="0.3" vector-effect="non-scaling-stroke"/><path d="M370 740 L400 750 M375 770 L405 780 M380 800 L410 810 M385 830 L415 840 M390 860 L418 870 M340 730 C350 760 360 800 360 840" stroke-width="0.3" vector-effect="non-scaling-stroke"/><path d="M330 960 C320 1000 330 1030 350 1048 M420 920 C460 930 500 950 520 1000 L510 1048" stroke-width="0.3" vector-effect="non-scaling-stroke"/><path d="M440 690 C470 760 500 820 520 880 L540 1048" stroke-width="0.3" vector-effect="non-scaling-stroke"/><path d="M445 700 C490 760 560 820 640 825 C750 830 850 760 890 690" stroke-width="0.3" vector-effect="non-scaling-stroke"/><path d="M610 830 C610 900 620 960 640 1000 C660 1030 720 1040 750 1020 C770 980 770 900 760 830" stroke-width="0.3" vector-effect="non-scaling-stroke"/><path d="M550 130 C540 200 545 280 550 340 C560 360 580 380 600 400" stroke-width="0.3" vector-effect="non-scaling-stroke"/><path d="M550 290 C600 310 700 330 810 330" stroke-width="0.3" vector-effect="non-scaling-stroke"/><path d="M490 0 C490 60 520 110 560 130 C620 150 700 150 760 130" stroke-width="0.3" vector-effect="non-scaling-stroke"/><path d="M720 180 C760 200 800 215 840 215 C900 200 940 140 935 60 L930 0" stroke-width="0.3" vector-effect="non-scaling-stroke"/><path d="M840 215 C820 260 815 330 830 380 C840 450 880 520 900 580" stroke-width="0.3" vector-effect="non-scaling-stroke"/><path d="M630 430 C700 420 780 410 850 420 L890 460 C830 460 760 470 690 490 M640 460 C720 470 760 480 780 490" stroke-width="0.3" vector-effect="non-scaling-stroke"/><path d="M805 490 L880 480 L920 540 C880 560 840 570 820 560 Z" stroke-width="0.3" vector-effect="non-scaling-stroke"/><path d="M760 480 C800 560 840 640 890 690 L1000 670 L1070 680" stroke-width="0.3" vector-effect="non-scaling-stroke"/><path d="M900 75 L980 75 C1040 80 1100 110 1130 160 L1180 190 L1190 230 L1160 290 L1100 300 L1000 270 C960 250 930 200 900 150 Z" stroke-width="0.3" vector-effect="non-scaling-stroke"/><path d="M960 190 L1110 160 M1080 180 C1060 200 1060 260 1090 280 M1120 170 L1180 200 M1110 250 L1170 270" stroke-width="0.3" vector-effect="non-scaling-stroke"/><path d="M1180 290 C1230 300 1280 330 1300 370 L1310 400 L1290 440 C1250 460 1200 470 1150 480 L1110 570 C1080 640 1060 700 1040 760 C1000 880 940 980 880 1048" stroke-width="0.3" vector-effect="non-scaling-stroke"/><path d="M830 250 C840 380 900 520 980 600 L1030 650 M1110 570 C1000 500 940 450 900 390" stroke-width="0.3" vector-effect="non-scaling-stroke"/><path d="M970 690 L1060 680 L1250 810 L1240 840 L1110 860 L1090 850 L1000 820 C950 790 920 750 900 700 M1130 840 C1160 830 1200 820 1240 820" stroke-width="0.3" vector-effect="non-scaling-stroke"/><path d="M850 255 C880 250 920 240 960 230 M830 380 C920 360 1000 340 1100 320" stroke-width="0.3" vector-effect="non-scaling-stroke"/><path d="M0 600 C50 560 120 520 175 490 M0 790 C80 810 200 830 350 820 M70 750 C150 720 220 700 290 680" stroke-width="0.3" vector-effect="non-scaling-stroke"/><path d="M0 890 C30 920 40 980 30 1048 M550 1048 C620 1000 700 960 760 930" stroke-width="0.3" vector-effect="non-scaling-stroke"/><path d="M1000 0 C990 60 960 120 940 170 M600 60 C680 60 740 70 780 90" stroke-width="0.3" vector-effect="non-scaling-stroke"/><path d="M365 720 L412 915" stroke-width="0.7" vector-effect="non-scaling-stroke"/><path d="M430 660 L445 700" stroke-width="0.7" vector-effect="non-scaling-stroke"/><path d="M610 825 L640 828" stroke-width="0.7" vector-effect="non-scaling-stroke"/></g></g></svg>
<div class="a" style="left:0px;top:1038px;width:1920px;height:2px;background:#0e0e0e;"></div>
<div class="a" style="left:0px;top:1040px;width:1920px;height:8px;background:#1f1c20;"></div>
<div class="a" style="left:345px;top:1040px;width:48px;height:8px;background:#4a4850;"></div>
<div class="a" style="left:1920px;top:1040px;width:8px;height:8px;background:#2c2a3c;"></div>
<div class="a" style="left:1915px;top:1040px;width:1px;height:8px;background:#5a5a5a;"></div>
<div class="t" style="left:1813.00px;top:1044.84px;font-size:12px;color:#e8e8e8;transform:scaleX(1.0000);">3:05 AM</div>
</body></html>
